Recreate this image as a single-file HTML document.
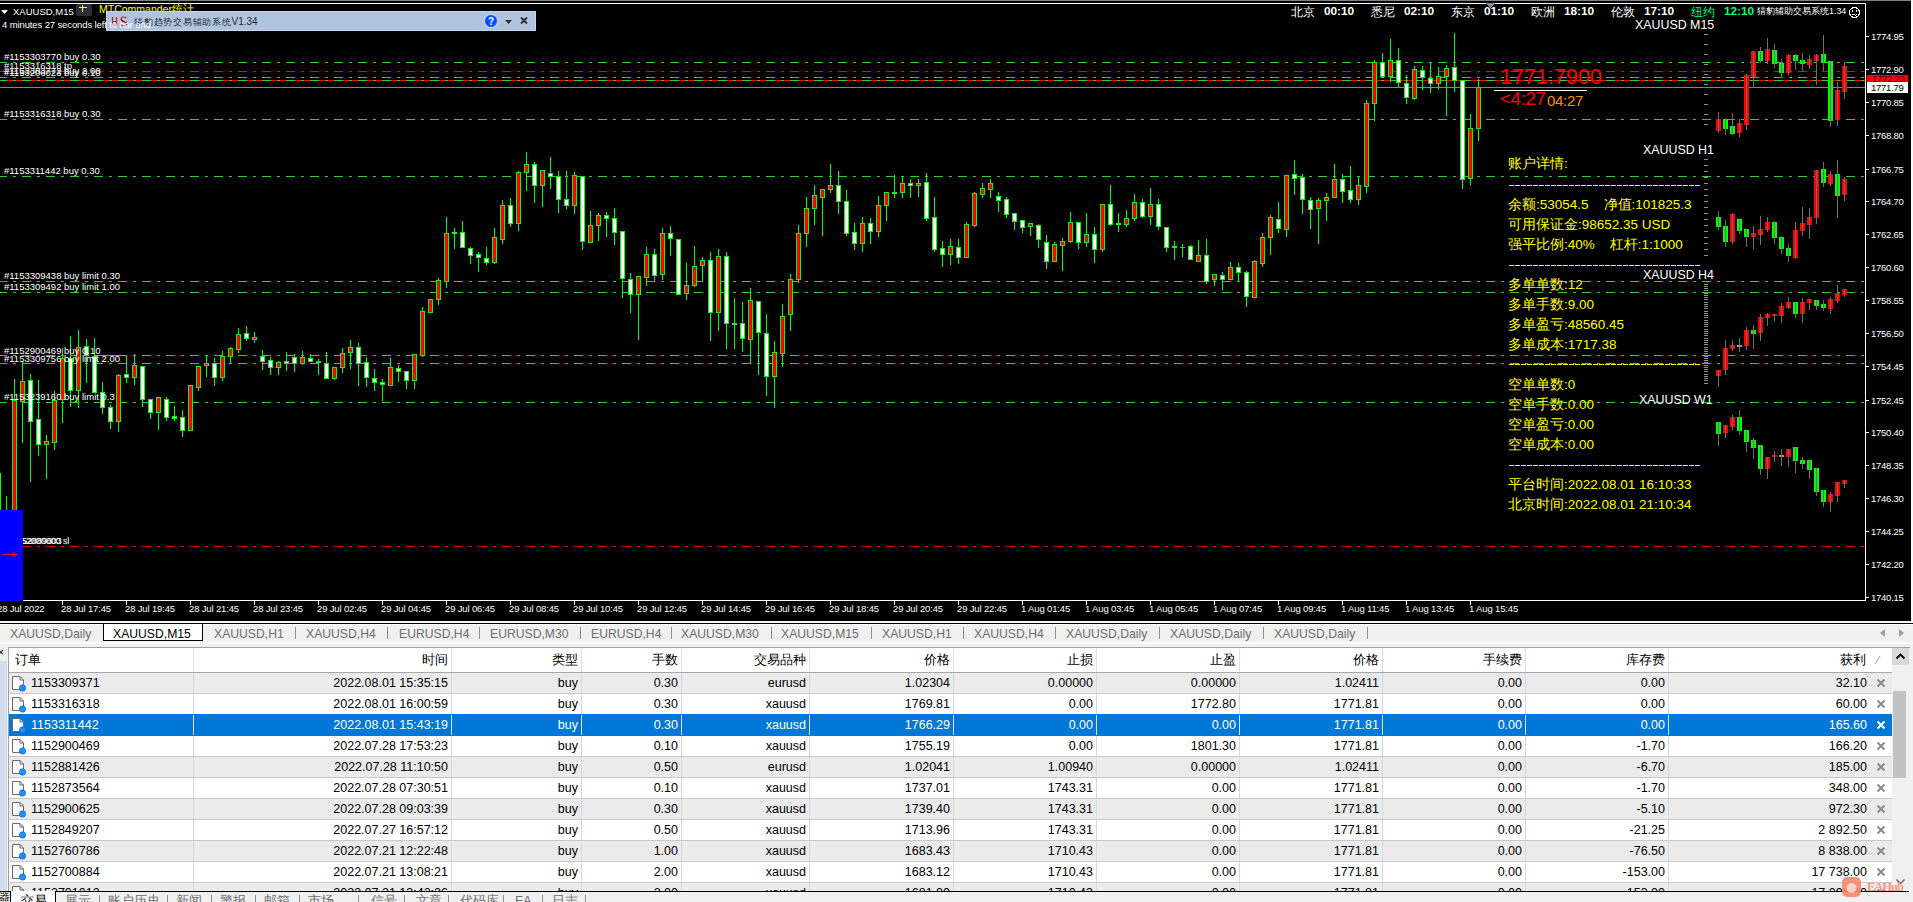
<!DOCTYPE html>
<html><head><meta charset="utf-8">
<style>
html,body{margin:0;padding:0;}
body{width:1913px;height:902px;overflow:hidden;position:relative;background:#f0f0f0;font-family:"Liberation Sans",sans-serif;}
.t{position:absolute;white-space:pre;font-family:"Liberation Sans",sans-serif;}
</style></head><body>
<svg width="1913" height="625" style="position:absolute;left:0;top:0" shape-rendering="crispEdges"><rect x="0" y="0" width="1911" height="621" fill="#000"/><line x1="0" y1="62.5" x2="1865" y2="62.5" stroke="#32cd32" stroke-width="1" stroke-dasharray="9 6 3 6" stroke-dashoffset="2"/><line x1="0" y1="77.5" x2="1865" y2="77.5" stroke="#32cd32" stroke-width="1" stroke-dasharray="9 6 3 6" stroke-dashoffset="2"/><line x1="0" y1="119.5" x2="1865" y2="119.5" stroke="#32cd32" stroke-width="1" stroke-dasharray="9 6 3 6" stroke-dashoffset="2"/><line x1="0" y1="176.5" x2="1865" y2="176.5" stroke="#32cd32" stroke-width="1" stroke-dasharray="9 6 3 6" stroke-dashoffset="2"/><line x1="0" y1="281.5" x2="1865" y2="281.5" stroke="#32cd32" stroke-width="1" stroke-dasharray="9 6 3 6" stroke-dashoffset="2"/><line x1="0" y1="292.5" x2="1865" y2="292.5" stroke="#32cd32" stroke-width="1" stroke-dasharray="9 6 3 6" stroke-dashoffset="2"/><line x1="0" y1="355.5" x2="1865" y2="355.5" stroke="#32cd32" stroke-width="1" stroke-dasharray="9 6 3 6" stroke-dashoffset="2"/><line x1="0" y1="363.5" x2="1865" y2="363.5" stroke="#32cd32" stroke-width="1" stroke-dasharray="9 6 3 6" stroke-dashoffset="2"/><line x1="0" y1="402.5" x2="1865" y2="402.5" stroke="#32cd32" stroke-width="1" stroke-dasharray="9 6 3 6" stroke-dashoffset="2"/><line x1="0" y1="71.5" x2="1865" y2="71.5" stroke="#ff0000" stroke-width="1" stroke-dasharray="9 6 3 6" stroke-dashoffset="2"/><rect x="0" y="80" width="1865" height="1" fill="#ff0000"/><line x1="0" y1="80.5" x2="1865" y2="80.5" stroke="#32cd32" stroke-width="1" stroke-dasharray="9 6 3 6" stroke-dashoffset="2"/><rect x="0" y="87" width="1865" height="1" fill="#778899"/><line x1="23" y1="546.5" x2="1865" y2="546.5" stroke="#ff0000" stroke-width="1" stroke-dasharray="9 6 3 6" stroke-dashoffset="1"/><rect x="0" y="473" width="1" height="40" fill="#00ff00"/><rect x="96" y="355" width="31" height="1" fill="#00ff00"/><rect x="6" y="496" width="1" height="20" fill="#00ff00"/><rect x="14" y="379" width="1" height="132" fill="#00ff00"/><rect x="12" y="400" width="5" height="111" fill="#00ff00"/><rect x="13" y="401" width="3" height="109" fill="#ff0000"/><rect x="22" y="362" width="1" height="81" fill="#00ff00"/><rect x="20" y="381" width="5" height="21" fill="#00ff00"/><rect x="21" y="382" width="3" height="19" fill="#ff0000"/><rect x="30" y="374" width="1" height="108" fill="#00ff00"/><rect x="28" y="380" width="5" height="42" fill="#00ff00"/><rect x="29" y="381" width="3" height="40" fill="#ffffff"/><rect x="38" y="380" width="1" height="76" fill="#00ff00"/><rect x="36" y="419" width="5" height="26" fill="#00ff00"/><rect x="37" y="420" width="3" height="24" fill="#ffffff"/><rect x="46" y="435" width="1" height="44" fill="#00ff00"/><rect x="44" y="441" width="5" height="4" fill="#00ff00"/><rect x="45" y="442" width="3" height="2" fill="#ff0000"/><rect x="54" y="391" width="1" height="59" fill="#00ff00"/><rect x="52" y="400" width="5" height="43" fill="#00ff00"/><rect x="53" y="401" width="3" height="41" fill="#ff0000"/><rect x="62" y="348" width="1" height="75" fill="#00ff00"/><rect x="60" y="358" width="5" height="42" fill="#00ff00"/><rect x="61" y="359" width="3" height="40" fill="#ff0000"/><rect x="70" y="336" width="1" height="71" fill="#00ff00"/><rect x="68" y="358" width="5" height="33" fill="#00ff00"/><rect x="69" y="359" width="3" height="31" fill="#ffffff"/><rect x="78" y="330" width="1" height="78" fill="#00ff00"/><rect x="76" y="347" width="5" height="44" fill="#00ff00"/><rect x="77" y="348" width="3" height="42" fill="#ff0000"/><rect x="86" y="339" width="1" height="44" fill="#00ff00"/><rect x="84" y="346" width="5" height="10" fill="#00ff00"/><rect x="85" y="347" width="3" height="8" fill="#ffffff"/><rect x="94" y="338" width="1" height="55" fill="#00ff00"/><rect x="92" y="356" width="5" height="37" fill="#00ff00"/><rect x="93" y="357" width="3" height="35" fill="#ffffff"/><rect x="102" y="382" width="1" height="32" fill="#00ff00"/><rect x="100" y="392" width="5" height="16" fill="#00ff00"/><rect x="101" y="393" width="3" height="14" fill="#ffffff"/><rect x="110" y="405" width="1" height="24" fill="#00ff00"/><rect x="108" y="407" width="5" height="15" fill="#00ff00"/><rect x="109" y="408" width="3" height="13" fill="#ffffff"/><rect x="118" y="374" width="1" height="58" fill="#00ff00"/><rect x="116" y="375" width="5" height="47" fill="#00ff00"/><rect x="117" y="376" width="3" height="45" fill="#ff0000"/><rect x="126" y="355" width="1" height="28" fill="#00ff00"/><rect x="124" y="374" width="5" height="4" fill="#00ff00"/><rect x="125" y="375" width="3" height="2" fill="#ffffff"/><rect x="134" y="354" width="1" height="31" fill="#00ff00"/><rect x="132" y="365" width="5" height="13" fill="#00ff00"/><rect x="133" y="366" width="3" height="11" fill="#ff0000"/><rect x="142" y="366" width="1" height="41" fill="#00ff00"/><rect x="140" y="366" width="5" height="34" fill="#00ff00"/><rect x="141" y="367" width="3" height="32" fill="#ffffff"/><rect x="150" y="399" width="1" height="20" fill="#00ff00"/><rect x="148" y="399" width="5" height="14" fill="#00ff00"/><rect x="149" y="400" width="3" height="12" fill="#ffffff"/><rect x="158" y="397" width="1" height="33" fill="#00ff00"/><rect x="156" y="397" width="5" height="16" fill="#00ff00"/><rect x="157" y="398" width="3" height="14" fill="#ff0000"/><rect x="166" y="397" width="1" height="24" fill="#00ff00"/><rect x="164" y="399" width="5" height="19" fill="#00ff00"/><rect x="165" y="400" width="3" height="17" fill="#ffffff"/><rect x="174" y="406" width="1" height="15" fill="#00ff00"/><rect x="172" y="416" width="5" height="3" fill="#00ff00"/><rect x="173" y="417" width="3" height="1" fill="#ffffff"/><rect x="182" y="410" width="1" height="27" fill="#00ff00"/><rect x="180" y="417" width="5" height="14" fill="#00ff00"/><rect x="181" y="418" width="3" height="12" fill="#ffffff"/><rect x="190" y="385" width="1" height="46" fill="#00ff00"/><rect x="188" y="385" width="5" height="46" fill="#00ff00"/><rect x="189" y="386" width="3" height="44" fill="#ff0000"/><rect x="198" y="366" width="1" height="25" fill="#00ff00"/><rect x="196" y="366" width="5" height="22" fill="#00ff00"/><rect x="197" y="367" width="3" height="20" fill="#ff0000"/><rect x="206" y="356" width="1" height="21" fill="#00ff00"/><rect x="204" y="363" width="5" height="3" fill="#00ff00"/><rect x="205" y="364" width="3" height="1" fill="#ff0000"/><rect x="214" y="358" width="1" height="28" fill="#00ff00"/><rect x="212" y="363" width="5" height="15" fill="#00ff00"/><rect x="213" y="364" width="3" height="13" fill="#ffffff"/><rect x="222" y="351" width="1" height="30" fill="#00ff00"/><rect x="220" y="356" width="5" height="22" fill="#00ff00"/><rect x="221" y="357" width="3" height="20" fill="#ff0000"/><rect x="230" y="347" width="1" height="17" fill="#00ff00"/><rect x="228" y="348" width="5" height="9" fill="#00ff00"/><rect x="229" y="349" width="3" height="7" fill="#ff0000"/><rect x="238" y="328" width="1" height="25" fill="#00ff00"/><rect x="236" y="334" width="5" height="16" fill="#00ff00"/><rect x="237" y="335" width="3" height="14" fill="#ff0000"/><rect x="246" y="326" width="1" height="15" fill="#00ff00"/><rect x="244" y="333" width="5" height="6" fill="#00ff00"/><rect x="245" y="334" width="3" height="4" fill="#ffffff"/><rect x="254" y="332" width="1" height="11" fill="#00ff00"/><rect x="252" y="337" width="5" height="3" fill="#00ff00"/><rect x="253" y="338" width="3" height="1" fill="#ff0000"/><rect x="262" y="350" width="1" height="20" fill="#00ff00"/><rect x="260" y="356" width="5" height="6" fill="#00ff00"/><rect x="261" y="357" width="3" height="4" fill="#ffffff"/><rect x="270" y="357" width="1" height="18" fill="#00ff00"/><rect x="268" y="360" width="5" height="8" fill="#00ff00"/><rect x="269" y="361" width="3" height="6" fill="#ffffff"/><rect x="278" y="361" width="1" height="14" fill="#00ff00"/><rect x="276" y="362" width="5" height="6" fill="#00ff00"/><rect x="277" y="363" width="3" height="4" fill="#ff0000"/><rect x="286" y="352" width="1" height="19" fill="#00ff00"/><rect x="284" y="361" width="5" height="3" fill="#00ff00"/><rect x="285" y="362" width="3" height="1" fill="#ffffff"/><rect x="294" y="354" width="1" height="18" fill="#00ff00"/><rect x="292" y="357" width="5" height="7" fill="#00ff00"/><rect x="293" y="358" width="3" height="5" fill="#ffffff"/><rect x="302" y="351" width="1" height="14" fill="#00ff00"/><rect x="300" y="357" width="5" height="7" fill="#00ff00"/><rect x="301" y="358" width="3" height="5" fill="#ff0000"/><rect x="310" y="354" width="1" height="8" fill="#00ff00"/><rect x="308" y="358" width="5" height="4" fill="#00ff00"/><rect x="309" y="359" width="3" height="2" fill="#ffffff"/><rect x="318" y="359" width="1" height="16" fill="#00ff00"/><rect x="316" y="361" width="5" height="2" fill="#00ff00"/><rect x="326" y="352" width="1" height="27" fill="#00ff00"/><rect x="324" y="363" width="5" height="16" fill="#00ff00"/><rect x="325" y="364" width="3" height="14" fill="#ffffff"/><rect x="334" y="367" width="1" height="13" fill="#00ff00"/><rect x="332" y="367" width="5" height="12" fill="#00ff00"/><rect x="333" y="368" width="3" height="10" fill="#ff0000"/><rect x="342" y="348" width="1" height="25" fill="#00ff00"/><rect x="340" y="353" width="5" height="15" fill="#00ff00"/><rect x="341" y="354" width="3" height="13" fill="#ff0000"/><rect x="350" y="340" width="1" height="29" fill="#00ff00"/><rect x="348" y="347" width="5" height="6" fill="#00ff00"/><rect x="349" y="348" width="3" height="4" fill="#ff0000"/><rect x="358" y="343" width="1" height="43" fill="#00ff00"/><rect x="356" y="347" width="5" height="17" fill="#00ff00"/><rect x="357" y="348" width="3" height="15" fill="#ffffff"/><rect x="366" y="357" width="1" height="30" fill="#00ff00"/><rect x="364" y="362" width="5" height="16" fill="#00ff00"/><rect x="365" y="363" width="3" height="14" fill="#ffffff"/><rect x="374" y="369" width="1" height="22" fill="#00ff00"/><rect x="372" y="378" width="5" height="5" fill="#00ff00"/><rect x="373" y="379" width="3" height="3" fill="#ffffff"/><rect x="382" y="379" width="1" height="22" fill="#00ff00"/><rect x="380" y="382" width="5" height="3" fill="#00ff00"/><rect x="381" y="383" width="3" height="1" fill="#ffffff"/><rect x="390" y="358" width="1" height="28" fill="#00ff00"/><rect x="388" y="367" width="5" height="19" fill="#00ff00"/><rect x="389" y="368" width="3" height="17" fill="#ff0000"/><rect x="398" y="365" width="1" height="17" fill="#00ff00"/><rect x="396" y="368" width="5" height="4" fill="#00ff00"/><rect x="397" y="369" width="3" height="2" fill="#ffffff"/><rect x="406" y="371" width="1" height="18" fill="#00ff00"/><rect x="404" y="371" width="5" height="10" fill="#00ff00"/><rect x="405" y="372" width="3" height="8" fill="#ffffff"/><rect x="414" y="354" width="1" height="35" fill="#00ff00"/><rect x="412" y="354" width="5" height="27" fill="#00ff00"/><rect x="413" y="355" width="3" height="25" fill="#ff0000"/><rect x="422" y="307" width="1" height="50" fill="#00ff00"/><rect x="420" y="311" width="5" height="45" fill="#00ff00"/><rect x="421" y="312" width="3" height="43" fill="#ff0000"/><rect x="430" y="299" width="1" height="14" fill="#00ff00"/><rect x="428" y="299" width="5" height="14" fill="#00ff00"/><rect x="429" y="300" width="3" height="12" fill="#ff0000"/><rect x="438" y="278" width="1" height="27" fill="#00ff00"/><rect x="436" y="280" width="5" height="20" fill="#00ff00"/><rect x="437" y="281" width="3" height="18" fill="#ff0000"/><rect x="446" y="217" width="1" height="71" fill="#00ff00"/><rect x="444" y="233" width="5" height="49" fill="#00ff00"/><rect x="445" y="234" width="3" height="47" fill="#ff0000"/><rect x="454" y="228" width="1" height="21" fill="#00ff00"/><rect x="452" y="232" width="5" height="2" fill="#00ff00"/><rect x="462" y="221" width="1" height="27" fill="#00ff00"/><rect x="460" y="232" width="5" height="16" fill="#00ff00"/><rect x="461" y="233" width="3" height="14" fill="#ffffff"/><rect x="470" y="247" width="1" height="17" fill="#00ff00"/><rect x="468" y="248" width="5" height="8" fill="#00ff00"/><rect x="469" y="249" width="3" height="6" fill="#ffffff"/><rect x="478" y="252" width="1" height="20" fill="#00ff00"/><rect x="476" y="254" width="5" height="4" fill="#00ff00"/><rect x="477" y="255" width="3" height="2" fill="#ffffff"/><rect x="486" y="247" width="1" height="18" fill="#00ff00"/><rect x="484" y="258" width="5" height="5" fill="#00ff00"/><rect x="485" y="259" width="3" height="3" fill="#ffffff"/><rect x="494" y="228" width="1" height="36" fill="#00ff00"/><rect x="492" y="237" width="5" height="26" fill="#00ff00"/><rect x="493" y="238" width="3" height="24" fill="#ff0000"/><rect x="502" y="200" width="1" height="44" fill="#00ff00"/><rect x="500" y="205" width="5" height="35" fill="#00ff00"/><rect x="501" y="206" width="3" height="33" fill="#ff0000"/><rect x="510" y="198" width="1" height="29" fill="#00ff00"/><rect x="508" y="205" width="5" height="19" fill="#00ff00"/><rect x="509" y="206" width="3" height="17" fill="#ffffff"/><rect x="518" y="171" width="1" height="60" fill="#00ff00"/><rect x="516" y="172" width="5" height="52" fill="#00ff00"/><rect x="517" y="173" width="3" height="50" fill="#ff0000"/><rect x="526" y="152" width="1" height="39" fill="#00ff00"/><rect x="524" y="164" width="5" height="9" fill="#00ff00"/><rect x="525" y="165" width="3" height="7" fill="#ff0000"/><rect x="534" y="162" width="1" height="41" fill="#00ff00"/><rect x="532" y="164" width="5" height="22" fill="#00ff00"/><rect x="533" y="165" width="3" height="20" fill="#ffffff"/><rect x="542" y="170" width="1" height="37" fill="#00ff00"/><rect x="540" y="170" width="5" height="16" fill="#00ff00"/><rect x="541" y="171" width="3" height="14" fill="#ff0000"/><rect x="550" y="157" width="1" height="32" fill="#00ff00"/><rect x="548" y="173" width="5" height="4" fill="#00ff00"/><rect x="549" y="174" width="3" height="2" fill="#ffffff"/><rect x="558" y="171" width="1" height="42" fill="#00ff00"/><rect x="556" y="176" width="5" height="24" fill="#00ff00"/><rect x="557" y="177" width="3" height="22" fill="#ffffff"/><rect x="566" y="171" width="1" height="38" fill="#00ff00"/><rect x="564" y="199" width="5" height="7" fill="#00ff00"/><rect x="565" y="200" width="3" height="5" fill="#ffffff"/><rect x="574" y="172" width="1" height="42" fill="#00ff00"/><rect x="572" y="175" width="5" height="31" fill="#00ff00"/><rect x="573" y="176" width="3" height="29" fill="#ff0000"/><rect x="582" y="176" width="1" height="74" fill="#00ff00"/><rect x="580" y="176" width="5" height="66" fill="#00ff00"/><rect x="581" y="177" width="3" height="64" fill="#ffffff"/><rect x="590" y="211" width="1" height="32" fill="#00ff00"/><rect x="588" y="225" width="5" height="18" fill="#00ff00"/><rect x="589" y="226" width="3" height="16" fill="#ff0000"/><rect x="598" y="213" width="1" height="28" fill="#00ff00"/><rect x="596" y="215" width="5" height="11" fill="#00ff00"/><rect x="597" y="216" width="3" height="9" fill="#ff0000"/><rect x="606" y="212" width="1" height="25" fill="#00ff00"/><rect x="604" y="215" width="5" height="4" fill="#00ff00"/><rect x="605" y="216" width="3" height="2" fill="#ffffff"/><rect x="614" y="208" width="1" height="37" fill="#00ff00"/><rect x="612" y="218" width="5" height="15" fill="#00ff00"/><rect x="613" y="219" width="3" height="13" fill="#ffffff"/><rect x="622" y="231" width="1" height="67" fill="#00ff00"/><rect x="620" y="231" width="5" height="48" fill="#00ff00"/><rect x="621" y="232" width="3" height="46" fill="#ffffff"/><rect x="630" y="273" width="1" height="40" fill="#00ff00"/><rect x="628" y="279" width="5" height="16" fill="#00ff00"/><rect x="629" y="280" width="3" height="14" fill="#ffffff"/><rect x="638" y="276" width="1" height="64" fill="#00ff00"/><rect x="636" y="276" width="5" height="19" fill="#00ff00"/><rect x="637" y="277" width="3" height="17" fill="#ff0000"/><rect x="646" y="247" width="1" height="39" fill="#00ff00"/><rect x="644" y="254" width="5" height="24" fill="#00ff00"/><rect x="645" y="255" width="3" height="22" fill="#ff0000"/><rect x="654" y="249" width="1" height="33" fill="#00ff00"/><rect x="652" y="254" width="5" height="22" fill="#00ff00"/><rect x="653" y="255" width="3" height="20" fill="#ffffff"/><rect x="662" y="228" width="1" height="52" fill="#00ff00"/><rect x="660" y="233" width="5" height="42" fill="#00ff00"/><rect x="661" y="234" width="3" height="40" fill="#ff0000"/><rect x="670" y="226" width="1" height="30" fill="#00ff00"/><rect x="668" y="233" width="5" height="6" fill="#00ff00"/><rect x="669" y="234" width="3" height="4" fill="#ffffff"/><rect x="678" y="239" width="1" height="56" fill="#00ff00"/><rect x="676" y="239" width="5" height="56" fill="#00ff00"/><rect x="677" y="240" width="3" height="54" fill="#ffffff"/><rect x="686" y="263" width="1" height="37" fill="#00ff00"/><rect x="684" y="285" width="5" height="9" fill="#00ff00"/><rect x="685" y="286" width="3" height="7" fill="#ff0000"/><rect x="694" y="246" width="1" height="41" fill="#00ff00"/><rect x="692" y="266" width="5" height="20" fill="#00ff00"/><rect x="693" y="267" width="3" height="18" fill="#ff0000"/><rect x="702" y="257" width="1" height="24" fill="#00ff00"/><rect x="700" y="260" width="5" height="6" fill="#00ff00"/><rect x="701" y="261" width="3" height="4" fill="#ff0000"/><rect x="710" y="252" width="1" height="89" fill="#00ff00"/><rect x="708" y="260" width="5" height="53" fill="#00ff00"/><rect x="709" y="261" width="3" height="51" fill="#ffffff"/><rect x="718" y="249" width="1" height="82" fill="#00ff00"/><rect x="716" y="256" width="5" height="57" fill="#00ff00"/><rect x="717" y="257" width="3" height="55" fill="#ff0000"/><rect x="726" y="252" width="1" height="97" fill="#00ff00"/><rect x="724" y="256" width="5" height="68" fill="#00ff00"/><rect x="725" y="257" width="3" height="66" fill="#ffffff"/><rect x="734" y="298" width="1" height="51" fill="#00ff00"/><rect x="732" y="323" width="5" height="2" fill="#00ff00"/><rect x="742" y="302" width="1" height="50" fill="#00ff00"/><rect x="740" y="323" width="5" height="16" fill="#00ff00"/><rect x="741" y="324" width="3" height="14" fill="#ffffff"/><rect x="750" y="288" width="1" height="76" fill="#00ff00"/><rect x="748" y="300" width="5" height="40" fill="#00ff00"/><rect x="749" y="301" width="3" height="38" fill="#ff0000"/><rect x="758" y="301" width="1" height="74" fill="#00ff00"/><rect x="756" y="301" width="5" height="32" fill="#00ff00"/><rect x="757" y="302" width="3" height="30" fill="#ffffff"/><rect x="766" y="314" width="1" height="82" fill="#00ff00"/><rect x="764" y="333" width="5" height="44" fill="#00ff00"/><rect x="765" y="334" width="3" height="42" fill="#ffffff"/><rect x="774" y="341" width="1" height="67" fill="#00ff00"/><rect x="772" y="352" width="5" height="25" fill="#00ff00"/><rect x="773" y="353" width="3" height="23" fill="#ff0000"/><rect x="782" y="304" width="1" height="63" fill="#00ff00"/><rect x="780" y="316" width="5" height="38" fill="#00ff00"/><rect x="781" y="317" width="3" height="36" fill="#ff0000"/><rect x="790" y="274" width="1" height="57" fill="#00ff00"/><rect x="788" y="279" width="5" height="36" fill="#00ff00"/><rect x="789" y="280" width="3" height="34" fill="#ff0000"/><rect x="798" y="225" width="1" height="58" fill="#00ff00"/><rect x="796" y="233" width="5" height="47" fill="#00ff00"/><rect x="797" y="234" width="3" height="45" fill="#ff0000"/><rect x="806" y="197" width="1" height="50" fill="#00ff00"/><rect x="804" y="208" width="5" height="26" fill="#00ff00"/><rect x="805" y="209" width="3" height="24" fill="#ff0000"/><rect x="814" y="185" width="1" height="40" fill="#00ff00"/><rect x="812" y="195" width="5" height="14" fill="#00ff00"/><rect x="813" y="196" width="3" height="12" fill="#ff0000"/><rect x="822" y="189" width="1" height="47" fill="#00ff00"/><rect x="820" y="189" width="5" height="9" fill="#00ff00"/><rect x="821" y="190" width="3" height="7" fill="#ff0000"/><rect x="830" y="164" width="1" height="29" fill="#00ff00"/><rect x="828" y="185" width="5" height="5" fill="#00ff00"/><rect x="829" y="186" width="3" height="3" fill="#ff0000"/><rect x="838" y="171" width="1" height="43" fill="#00ff00"/><rect x="836" y="185" width="5" height="17" fill="#00ff00"/><rect x="837" y="186" width="3" height="15" fill="#ffffff"/><rect x="846" y="190" width="1" height="46" fill="#00ff00"/><rect x="844" y="201" width="5" height="33" fill="#00ff00"/><rect x="845" y="202" width="3" height="31" fill="#ffffff"/><rect x="854" y="223" width="1" height="27" fill="#00ff00"/><rect x="852" y="232" width="5" height="12" fill="#00ff00"/><rect x="853" y="233" width="3" height="10" fill="#ffffff"/><rect x="862" y="217" width="1" height="35" fill="#00ff00"/><rect x="860" y="223" width="5" height="21" fill="#00ff00"/><rect x="861" y="224" width="3" height="19" fill="#ff0000"/><rect x="870" y="218" width="1" height="26" fill="#00ff00"/><rect x="868" y="223" width="5" height="9" fill="#00ff00"/><rect x="869" y="224" width="3" height="7" fill="#ffffff"/><rect x="878" y="196" width="1" height="41" fill="#00ff00"/><rect x="876" y="205" width="5" height="27" fill="#00ff00"/><rect x="877" y="206" width="3" height="25" fill="#ff0000"/><rect x="886" y="192" width="1" height="29" fill="#00ff00"/><rect x="884" y="192" width="5" height="14" fill="#00ff00"/><rect x="885" y="193" width="3" height="12" fill="#ff0000"/><rect x="894" y="175" width="1" height="23" fill="#00ff00"/><rect x="892" y="192" width="5" height="2" fill="#00ff00"/><rect x="902" y="176" width="1" height="22" fill="#00ff00"/><rect x="900" y="183" width="5" height="10" fill="#00ff00"/><rect x="901" y="184" width="3" height="8" fill="#ff0000"/><rect x="910" y="179" width="1" height="19" fill="#00ff00"/><rect x="908" y="183" width="5" height="3" fill="#00ff00"/><rect x="909" y="184" width="3" height="1" fill="#ffffff"/><rect x="918" y="179" width="1" height="18" fill="#00ff00"/><rect x="916" y="183" width="5" height="3" fill="#00ff00"/><rect x="917" y="184" width="3" height="1" fill="#ff0000"/><rect x="926" y="173" width="1" height="48" fill="#00ff00"/><rect x="924" y="182" width="5" height="37" fill="#00ff00"/><rect x="925" y="183" width="3" height="35" fill="#ffffff"/><rect x="934" y="197" width="1" height="55" fill="#00ff00"/><rect x="932" y="217" width="5" height="33" fill="#00ff00"/><rect x="933" y="218" width="3" height="31" fill="#ffffff"/><rect x="942" y="241" width="1" height="26" fill="#00ff00"/><rect x="940" y="248" width="5" height="7" fill="#00ff00"/><rect x="941" y="249" width="3" height="5" fill="#ffffff"/><rect x="950" y="239" width="1" height="26" fill="#00ff00"/><rect x="948" y="246" width="5" height="9" fill="#00ff00"/><rect x="949" y="247" width="3" height="7" fill="#ff0000"/><rect x="958" y="239" width="1" height="25" fill="#00ff00"/><rect x="956" y="247" width="5" height="11" fill="#00ff00"/><rect x="957" y="248" width="3" height="9" fill="#ffffff"/><rect x="966" y="222" width="1" height="36" fill="#00ff00"/><rect x="964" y="224" width="5" height="34" fill="#00ff00"/><rect x="965" y="225" width="3" height="32" fill="#ff0000"/><rect x="974" y="192" width="1" height="35" fill="#00ff00"/><rect x="972" y="193" width="5" height="33" fill="#00ff00"/><rect x="973" y="194" width="3" height="31" fill="#ff0000"/><rect x="982" y="183" width="1" height="15" fill="#00ff00"/><rect x="980" y="188" width="5" height="7" fill="#00ff00"/><rect x="981" y="189" width="3" height="5" fill="#ff0000"/><rect x="990" y="179" width="1" height="19" fill="#00ff00"/><rect x="988" y="183" width="5" height="7" fill="#00ff00"/><rect x="989" y="184" width="3" height="5" fill="#ff0000"/><rect x="998" y="192" width="1" height="20" fill="#00ff00"/><rect x="996" y="196" width="5" height="5" fill="#00ff00"/><rect x="997" y="197" width="3" height="3" fill="#ffffff"/><rect x="1006" y="197" width="1" height="21" fill="#00ff00"/><rect x="1004" y="199" width="5" height="16" fill="#00ff00"/><rect x="1005" y="200" width="3" height="14" fill="#ffffff"/><rect x="1014" y="213" width="1" height="17" fill="#00ff00"/><rect x="1012" y="213" width="5" height="9" fill="#00ff00"/><rect x="1013" y="214" width="3" height="7" fill="#ffffff"/><rect x="1022" y="220" width="1" height="13" fill="#00ff00"/><rect x="1020" y="220" width="5" height="8" fill="#00ff00"/><rect x="1021" y="221" width="3" height="6" fill="#ffffff"/><rect x="1030" y="223" width="1" height="13" fill="#00ff00"/><rect x="1028" y="223" width="5" height="4" fill="#00ff00"/><rect x="1029" y="224" width="3" height="2" fill="#ff0000"/><rect x="1038" y="224" width="1" height="24" fill="#00ff00"/><rect x="1036" y="225" width="5" height="15" fill="#00ff00"/><rect x="1037" y="226" width="3" height="13" fill="#ffffff"/><rect x="1046" y="235" width="1" height="34" fill="#00ff00"/><rect x="1044" y="242" width="5" height="20" fill="#00ff00"/><rect x="1045" y="243" width="3" height="18" fill="#ffffff"/><rect x="1054" y="242" width="1" height="20" fill="#00ff00"/><rect x="1052" y="244" width="5" height="18" fill="#00ff00"/><rect x="1053" y="245" width="3" height="16" fill="#ff0000"/><rect x="1062" y="238" width="1" height="33" fill="#00ff00"/><rect x="1060" y="241" width="5" height="5" fill="#00ff00"/><rect x="1061" y="242" width="3" height="3" fill="#ff0000"/><rect x="1070" y="212" width="1" height="31" fill="#00ff00"/><rect x="1068" y="222" width="5" height="20" fill="#00ff00"/><rect x="1069" y="223" width="3" height="18" fill="#ff0000"/><rect x="1078" y="222" width="1" height="27" fill="#00ff00"/><rect x="1076" y="222" width="5" height="21" fill="#00ff00"/><rect x="1077" y="223" width="3" height="19" fill="#ffffff"/><rect x="1086" y="213" width="1" height="34" fill="#00ff00"/><rect x="1084" y="234" width="5" height="9" fill="#00ff00"/><rect x="1085" y="235" width="3" height="7" fill="#ff0000"/><rect x="1094" y="227" width="1" height="36" fill="#00ff00"/><rect x="1092" y="234" width="5" height="16" fill="#00ff00"/><rect x="1093" y="235" width="3" height="14" fill="#ffffff"/><rect x="1102" y="204" width="1" height="48" fill="#00ff00"/><rect x="1100" y="204" width="5" height="46" fill="#00ff00"/><rect x="1101" y="205" width="3" height="44" fill="#ff0000"/><rect x="1110" y="185" width="1" height="41" fill="#00ff00"/><rect x="1108" y="204" width="5" height="21" fill="#00ff00"/><rect x="1109" y="205" width="3" height="19" fill="#ffffff"/><rect x="1118" y="213" width="1" height="19" fill="#00ff00"/><rect x="1116" y="223" width="5" height="2" fill="#00ff00"/><rect x="1126" y="210" width="1" height="17" fill="#00ff00"/><rect x="1124" y="218" width="5" height="7" fill="#00ff00"/><rect x="1125" y="219" width="3" height="5" fill="#ff0000"/><rect x="1134" y="194" width="1" height="27" fill="#00ff00"/><rect x="1132" y="202" width="5" height="17" fill="#00ff00"/><rect x="1133" y="203" width="3" height="15" fill="#ff0000"/><rect x="1142" y="199" width="1" height="19" fill="#00ff00"/><rect x="1140" y="202" width="5" height="15" fill="#00ff00"/><rect x="1141" y="203" width="3" height="13" fill="#ffffff"/><rect x="1150" y="188" width="1" height="37" fill="#00ff00"/><rect x="1148" y="204" width="5" height="13" fill="#00ff00"/><rect x="1149" y="205" width="3" height="11" fill="#ff0000"/><rect x="1158" y="199" width="1" height="31" fill="#00ff00"/><rect x="1156" y="204" width="5" height="23" fill="#00ff00"/><rect x="1157" y="205" width="3" height="21" fill="#ffffff"/><rect x="1166" y="227" width="1" height="25" fill="#00ff00"/><rect x="1164" y="227" width="5" height="21" fill="#00ff00"/><rect x="1165" y="228" width="3" height="19" fill="#ffffff"/><rect x="1174" y="241" width="1" height="19" fill="#00ff00"/><rect x="1172" y="246" width="5" height="2" fill="#00ff00"/><rect x="1182" y="244" width="1" height="13" fill="#00ff00"/><rect x="1180" y="247" width="5" height="1" fill="#00ff00"/><rect x="1190" y="245" width="1" height="15" fill="#00ff00"/><rect x="1188" y="246" width="5" height="14" fill="#00ff00"/><rect x="1189" y="247" width="3" height="12" fill="#ffffff"/><rect x="1198" y="240" width="1" height="22" fill="#00ff00"/><rect x="1196" y="255" width="5" height="7" fill="#00ff00"/><rect x="1197" y="256" width="3" height="5" fill="#ff0000"/><rect x="1206" y="239" width="1" height="45" fill="#00ff00"/><rect x="1204" y="255" width="5" height="27" fill="#00ff00"/><rect x="1205" y="256" width="3" height="25" fill="#ffffff"/><rect x="1214" y="274" width="1" height="12" fill="#00ff00"/><rect x="1212" y="274" width="5" height="6" fill="#00ff00"/><rect x="1213" y="275" width="3" height="4" fill="#ff0000"/><rect x="1222" y="272" width="1" height="18" fill="#00ff00"/><rect x="1220" y="275" width="5" height="5" fill="#00ff00"/><rect x="1221" y="276" width="3" height="3" fill="#ffffff"/><rect x="1230" y="262" width="1" height="18" fill="#00ff00"/><rect x="1228" y="267" width="5" height="13" fill="#00ff00"/><rect x="1229" y="268" width="3" height="11" fill="#ff0000"/><rect x="1238" y="263" width="1" height="18" fill="#00ff00"/><rect x="1236" y="267" width="5" height="6" fill="#00ff00"/><rect x="1237" y="268" width="3" height="4" fill="#ffffff"/><rect x="1246" y="271" width="1" height="36" fill="#00ff00"/><rect x="1244" y="272" width="5" height="25" fill="#00ff00"/><rect x="1245" y="273" width="3" height="23" fill="#ffffff"/><rect x="1254" y="260" width="1" height="38" fill="#00ff00"/><rect x="1252" y="261" width="5" height="37" fill="#00ff00"/><rect x="1253" y="262" width="3" height="35" fill="#ff0000"/><rect x="1262" y="233" width="1" height="34" fill="#00ff00"/><rect x="1260" y="237" width="5" height="27" fill="#00ff00"/><rect x="1261" y="238" width="3" height="25" fill="#ff0000"/><rect x="1270" y="215" width="1" height="40" fill="#00ff00"/><rect x="1268" y="217" width="5" height="21" fill="#00ff00"/><rect x="1269" y="218" width="3" height="19" fill="#ff0000"/><rect x="1278" y="202" width="1" height="31" fill="#00ff00"/><rect x="1276" y="219" width="5" height="10" fill="#00ff00"/><rect x="1277" y="220" width="3" height="8" fill="#ffffff"/><rect x="1286" y="175" width="1" height="62" fill="#00ff00"/><rect x="1284" y="175" width="5" height="55" fill="#00ff00"/><rect x="1285" y="176" width="3" height="53" fill="#ff0000"/><rect x="1294" y="160" width="1" height="35" fill="#00ff00"/><rect x="1292" y="174" width="5" height="5" fill="#00ff00"/><rect x="1293" y="175" width="3" height="3" fill="#ffffff"/><rect x="1302" y="174" width="1" height="40" fill="#00ff00"/><rect x="1300" y="177" width="5" height="23" fill="#00ff00"/><rect x="1301" y="178" width="3" height="21" fill="#ffffff"/><rect x="1310" y="197" width="1" height="32" fill="#00ff00"/><rect x="1308" y="200" width="5" height="10" fill="#00ff00"/><rect x="1309" y="201" width="3" height="8" fill="#ffffff"/><rect x="1318" y="198" width="1" height="46" fill="#00ff00"/><rect x="1316" y="200" width="5" height="9" fill="#00ff00"/><rect x="1317" y="201" width="3" height="7" fill="#ff0000"/><rect x="1326" y="193" width="1" height="28" fill="#00ff00"/><rect x="1324" y="197" width="5" height="4" fill="#00ff00"/><rect x="1325" y="198" width="3" height="2" fill="#ff0000"/><rect x="1334" y="164" width="1" height="34" fill="#00ff00"/><rect x="1332" y="179" width="5" height="19" fill="#00ff00"/><rect x="1333" y="180" width="3" height="17" fill="#ff0000"/><rect x="1342" y="174" width="1" height="29" fill="#00ff00"/><rect x="1340" y="179" width="5" height="13" fill="#00ff00"/><rect x="1341" y="180" width="3" height="11" fill="#ffffff"/><rect x="1350" y="166" width="1" height="37" fill="#00ff00"/><rect x="1348" y="190" width="5" height="10" fill="#00ff00"/><rect x="1349" y="191" width="3" height="8" fill="#ffffff"/><rect x="1358" y="176" width="1" height="29" fill="#00ff00"/><rect x="1356" y="185" width="5" height="15" fill="#00ff00"/><rect x="1357" y="186" width="3" height="13" fill="#ff0000"/><rect x="1366" y="100" width="1" height="93" fill="#00ff00"/><rect x="1364" y="103" width="5" height="84" fill="#00ff00"/><rect x="1365" y="104" width="3" height="82" fill="#ff0000"/><rect x="1374" y="60" width="1" height="61" fill="#00ff00"/><rect x="1372" y="62" width="5" height="42" fill="#00ff00"/><rect x="1373" y="63" width="3" height="40" fill="#ff0000"/><rect x="1382" y="53" width="1" height="25" fill="#00ff00"/><rect x="1380" y="62" width="5" height="15" fill="#00ff00"/><rect x="1381" y="63" width="3" height="13" fill="#ffffff"/><rect x="1390" y="39" width="1" height="43" fill="#00ff00"/><rect x="1388" y="60" width="5" height="17" fill="#00ff00"/><rect x="1389" y="61" width="3" height="15" fill="#ff0000"/><rect x="1398" y="48" width="1" height="39" fill="#00ff00"/><rect x="1396" y="60" width="5" height="23" fill="#00ff00"/><rect x="1397" y="61" width="3" height="21" fill="#ffffff"/><rect x="1406" y="75" width="1" height="29" fill="#00ff00"/><rect x="1404" y="83" width="5" height="15" fill="#00ff00"/><rect x="1405" y="84" width="3" height="13" fill="#ffffff"/><rect x="1414" y="66" width="1" height="34" fill="#00ff00"/><rect x="1412" y="69" width="5" height="30" fill="#00ff00"/><rect x="1413" y="70" width="3" height="28" fill="#ff0000"/><rect x="1422" y="66" width="1" height="24" fill="#00ff00"/><rect x="1420" y="70" width="5" height="8" fill="#00ff00"/><rect x="1421" y="71" width="3" height="6" fill="#ffffff"/><rect x="1430" y="62" width="1" height="31" fill="#00ff00"/><rect x="1428" y="78" width="5" height="6" fill="#00ff00"/><rect x="1429" y="79" width="3" height="4" fill="#ffffff"/><rect x="1438" y="67" width="1" height="22" fill="#00ff00"/><rect x="1436" y="76" width="5" height="8" fill="#00ff00"/><rect x="1437" y="77" width="3" height="6" fill="#ff0000"/><rect x="1446" y="65" width="1" height="51" fill="#00ff00"/><rect x="1444" y="68" width="5" height="9" fill="#00ff00"/><rect x="1445" y="69" width="3" height="7" fill="#ff0000"/><rect x="1454" y="33" width="1" height="59" fill="#00ff00"/><rect x="1452" y="67" width="5" height="14" fill="#00ff00"/><rect x="1453" y="68" width="3" height="12" fill="#ffffff"/><rect x="1462" y="80" width="1" height="109" fill="#00ff00"/><rect x="1460" y="80" width="5" height="100" fill="#00ff00"/><rect x="1461" y="81" width="3" height="98" fill="#ffffff"/><rect x="1470" y="114" width="1" height="71" fill="#00ff00"/><rect x="1468" y="128" width="5" height="51" fill="#00ff00"/><rect x="1469" y="129" width="3" height="49" fill="#ff0000"/><rect x="1478" y="79" width="1" height="62" fill="#00ff00"/><rect x="1476" y="87" width="5" height="42" fill="#00ff00"/><rect x="1477" y="88" width="3" height="40" fill="#ff0000"/><rect x="1716" y="119" width="5" height="12" fill="#ff0000"/><rect x="1718" y="112" width="1" height="21" fill="#6e6e6e"/><rect x="1723" y="119" width="5" height="10" fill="#00ff00"/><rect x="1725" y="118" width="1" height="17" fill="#6e6e6e"/><rect x="1730" y="126" width="5" height="8" fill="#00ff00"/><rect x="1732" y="113" width="1" height="22" fill="#6e6e6e"/><rect x="1737" y="123" width="5" height="10" fill="#ff0000"/><rect x="1739" y="119" width="1" height="18" fill="#6e6e6e"/><rect x="1744" y="75" width="5" height="50" fill="#ff0000"/><rect x="1746" y="74" width="1" height="56" fill="#6e6e6e"/><rect x="1751" y="51" width="5" height="26" fill="#ff0000"/><rect x="1753" y="51" width="1" height="37" fill="#6e6e6e"/><rect x="1758" y="51" width="5" height="10" fill="#00ff00"/><rect x="1760" y="47" width="1" height="16" fill="#6e6e6e"/><rect x="1765" y="49" width="5" height="12" fill="#ff0000"/><rect x="1767" y="38" width="1" height="26" fill="#6e6e6e"/><rect x="1772" y="50" width="5" height="14" fill="#00ff00"/><rect x="1774" y="44" width="1" height="24" fill="#6e6e6e"/><rect x="1779" y="63" width="5" height="10" fill="#00ff00"/><rect x="1781" y="59" width="1" height="19" fill="#6e6e6e"/><rect x="1786" y="55" width="5" height="18" fill="#ff0000"/><rect x="1788" y="54" width="1" height="21" fill="#6e6e6e"/><rect x="1793" y="55" width="5" height="6" fill="#00ff00"/><rect x="1795" y="54" width="1" height="16" fill="#6e6e6e"/><rect x="1800" y="60" width="5" height="4" fill="#00ff00"/><rect x="1802" y="53" width="1" height="18" fill="#6e6e6e"/><rect x="1807" y="59" width="5" height="6" fill="#ff0000"/><rect x="1809" y="55" width="1" height="14" fill="#6e6e6e"/><rect x="1814" y="55" width="5" height="6" fill="#ff0000"/><rect x="1816" y="54" width="1" height="31" fill="#6e6e6e"/><rect x="1821" y="54" width="5" height="9" fill="#00ff00"/><rect x="1823" y="35" width="1" height="36" fill="#6e6e6e"/><rect x="1828" y="61" width="5" height="60" fill="#00ff00"/><rect x="1830" y="61" width="1" height="66" fill="#6e6e6e"/><rect x="1835" y="90" width="5" height="30" fill="#ff0000"/><rect x="1837" y="82" width="1" height="44" fill="#6e6e6e"/><rect x="1842" y="66" width="5" height="26" fill="#ff0000"/><rect x="1844" y="62" width="1" height="37" fill="#6e6e6e"/><rect x="1716" y="217" width="5" height="10" fill="#00ff00"/><rect x="1718" y="211" width="1" height="19" fill="#6e6e6e"/><rect x="1723" y="226" width="5" height="16" fill="#00ff00"/><rect x="1725" y="220" width="1" height="27" fill="#6e6e6e"/><rect x="1730" y="214" width="5" height="28" fill="#ff0000"/><rect x="1732" y="213" width="1" height="31" fill="#6e6e6e"/><rect x="1737" y="219" width="5" height="12" fill="#00ff00"/><rect x="1739" y="218" width="1" height="16" fill="#6e6e6e"/><rect x="1744" y="229" width="5" height="8" fill="#00ff00"/><rect x="1746" y="229" width="1" height="18" fill="#6e6e6e"/><rect x="1751" y="233" width="5" height="4" fill="#ff0000"/><rect x="1753" y="226" width="1" height="23" fill="#6e6e6e"/><rect x="1758" y="229" width="5" height="6" fill="#ff0000"/><rect x="1760" y="216" width="1" height="29" fill="#6e6e6e"/><rect x="1765" y="222" width="5" height="8" fill="#ff0000"/><rect x="1767" y="217" width="1" height="15" fill="#6e6e6e"/><rect x="1772" y="222" width="5" height="16" fill="#00ff00"/><rect x="1774" y="221" width="1" height="23" fill="#6e6e6e"/><rect x="1779" y="237" width="5" height="12" fill="#00ff00"/><rect x="1781" y="236" width="1" height="18" fill="#6e6e6e"/><rect x="1786" y="248" width="5" height="8" fill="#00ff00"/><rect x="1788" y="244" width="1" height="18" fill="#6e6e6e"/><rect x="1793" y="230" width="5" height="28" fill="#ff0000"/><rect x="1795" y="222" width="1" height="37" fill="#6e6e6e"/><rect x="1800" y="223" width="5" height="8" fill="#ff0000"/><rect x="1802" y="207" width="1" height="29" fill="#6e6e6e"/><rect x="1807" y="217" width="5" height="8" fill="#ff0000"/><rect x="1809" y="208" width="1" height="31" fill="#6e6e6e"/><rect x="1814" y="170" width="5" height="48" fill="#ff0000"/><rect x="1816" y="170" width="1" height="54" fill="#6e6e6e"/><rect x="1821" y="169" width="5" height="14" fill="#00ff00"/><rect x="1823" y="162" width="1" height="25" fill="#6e6e6e"/><rect x="1828" y="174" width="5" height="10" fill="#ff0000"/><rect x="1830" y="171" width="1" height="15" fill="#6e6e6e"/><rect x="1835" y="174" width="5" height="22" fill="#00ff00"/><rect x="1837" y="160" width="1" height="58" fill="#6e6e6e"/><rect x="1842" y="179" width="5" height="16" fill="#ff0000"/><rect x="1844" y="177" width="1" height="24" fill="#6e6e6e"/><rect x="1716" y="370" width="5" height="6" fill="#ff0000"/><rect x="1718" y="370" width="1" height="17" fill="#6e6e6e"/><rect x="1723" y="348" width="5" height="22" fill="#ff0000"/><rect x="1725" y="340" width="1" height="35" fill="#6e6e6e"/><rect x="1730" y="345" width="5" height="4" fill="#ff0000"/><rect x="1732" y="340" width="1" height="11" fill="#6e6e6e"/><rect x="1737" y="345" width="5" height="2" fill="#a0a0a0"/><rect x="1739" y="338" width="1" height="14" fill="#6e6e6e"/><rect x="1744" y="330" width="5" height="16" fill="#ff0000"/><rect x="1746" y="327" width="1" height="23" fill="#6e6e6e"/><rect x="1751" y="330" width="5" height="4" fill="#00ff00"/><rect x="1753" y="325" width="1" height="24" fill="#6e6e6e"/><rect x="1758" y="317" width="5" height="16" fill="#ff0000"/><rect x="1760" y="314" width="1" height="27" fill="#6e6e6e"/><rect x="1765" y="314" width="5" height="4" fill="#ff0000"/><rect x="1767" y="313" width="1" height="13" fill="#6e6e6e"/><rect x="1772" y="314" width="5" height="2" fill="#ff0000"/><rect x="1774" y="314" width="1" height="7" fill="#6e6e6e"/><rect x="1779" y="306" width="5" height="10" fill="#ff0000"/><rect x="1781" y="303" width="1" height="20" fill="#6e6e6e"/><rect x="1786" y="302" width="5" height="6" fill="#ff0000"/><rect x="1788" y="297" width="1" height="12" fill="#6e6e6e"/><rect x="1793" y="302" width="5" height="12" fill="#00ff00"/><rect x="1795" y="302" width="1" height="16" fill="#6e6e6e"/><rect x="1800" y="302" width="5" height="12" fill="#ff0000"/><rect x="1802" y="298" width="1" height="25" fill="#6e6e6e"/><rect x="1807" y="299" width="5" height="4" fill="#ff0000"/><rect x="1809" y="299" width="1" height="11" fill="#6e6e6e"/><rect x="1814" y="300" width="5" height="6" fill="#00ff00"/><rect x="1816" y="300" width="1" height="10" fill="#6e6e6e"/><rect x="1821" y="304" width="5" height="4" fill="#00ff00"/><rect x="1823" y="300" width="1" height="11" fill="#6e6e6e"/><rect x="1828" y="299" width="5" height="10" fill="#ff0000"/><rect x="1830" y="297" width="1" height="17" fill="#6e6e6e"/><rect x="1835" y="293" width="5" height="8" fill="#ff0000"/><rect x="1837" y="285" width="1" height="18" fill="#6e6e6e"/><rect x="1842" y="289" width="5" height="6" fill="#ff0000"/><rect x="1844" y="289" width="1" height="8" fill="#6e6e6e"/><rect x="1716" y="422" width="5" height="12" fill="#00ff00"/><rect x="1718" y="422" width="1" height="24" fill="#6e6e6e"/><rect x="1723" y="425" width="5" height="8" fill="#ff0000"/><rect x="1725" y="425" width="1" height="13" fill="#6e6e6e"/><rect x="1730" y="417" width="5" height="10" fill="#ff0000"/><rect x="1732" y="415" width="1" height="15" fill="#6e6e6e"/><rect x="1737" y="417" width="5" height="14" fill="#00ff00"/><rect x="1739" y="410" width="1" height="25" fill="#6e6e6e"/><rect x="1744" y="430" width="5" height="12" fill="#00ff00"/><rect x="1746" y="430" width="1" height="22" fill="#6e6e6e"/><rect x="1751" y="440" width="5" height="8" fill="#00ff00"/><rect x="1753" y="438" width="1" height="21" fill="#6e6e6e"/><rect x="1758" y="445" width="5" height="24" fill="#00ff00"/><rect x="1760" y="445" width="1" height="30" fill="#6e6e6e"/><rect x="1765" y="457" width="5" height="12" fill="#ff0000"/><rect x="1767" y="457" width="1" height="22" fill="#6e6e6e"/><rect x="1772" y="455" width="5" height="2" fill="#ff0000"/><rect x="1774" y="451" width="1" height="11" fill="#6e6e6e"/><rect x="1779" y="455" width="5" height="2" fill="#a0a0a0"/><rect x="1781" y="449" width="1" height="17" fill="#6e6e6e"/><rect x="1786" y="449" width="5" height="8" fill="#ff0000"/><rect x="1788" y="449" width="1" height="18" fill="#6e6e6e"/><rect x="1793" y="447" width="5" height="14" fill="#00ff00"/><rect x="1795" y="447" width="1" height="26" fill="#6e6e6e"/><rect x="1800" y="460" width="5" height="4" fill="#00ff00"/><rect x="1802" y="457" width="1" height="12" fill="#6e6e6e"/><rect x="1807" y="460" width="5" height="10" fill="#00ff00"/><rect x="1809" y="460" width="1" height="19" fill="#6e6e6e"/><rect x="1814" y="468" width="5" height="24" fill="#00ff00"/><rect x="1816" y="468" width="1" height="28" fill="#6e6e6e"/><rect x="1821" y="490" width="5" height="12" fill="#00ff00"/><rect x="1823" y="490" width="1" height="17" fill="#6e6e6e"/><rect x="1828" y="494" width="5" height="8" fill="#ff0000"/><rect x="1830" y="492" width="1" height="20" fill="#6e6e6e"/><rect x="1835" y="482" width="5" height="14" fill="#ff0000"/><rect x="1837" y="482" width="1" height="20" fill="#6e6e6e"/><rect x="1842" y="480" width="5" height="4" fill="#ff0000"/><rect x="1844" y="480" width="1" height="8" fill="#6e6e6e"/><rect x="1704" y="34" width="4" height="1" fill="#909090"/><rect x="1704" y="44" width="4" height="1" fill="#909090"/><rect x="1704" y="54" width="4" height="1" fill="#909090"/><rect x="1704" y="64" width="4" height="1" fill="#909090"/><rect x="1704" y="74" width="4" height="1" fill="#909090"/><rect x="1704" y="84" width="4" height="1" fill="#909090"/><rect x="1704" y="94" width="4" height="1" fill="#909090"/><rect x="1704" y="104" width="4" height="1" fill="#909090"/><rect x="1704" y="114" width="4" height="1" fill="#909090"/><rect x="1704" y="124" width="4" height="1" fill="#909090"/><rect x="1704" y="159" width="4" height="1" fill="#909090"/><rect x="1704" y="165" width="4" height="1" fill="#909090"/><rect x="1704" y="171" width="4" height="1" fill="#909090"/><rect x="1704" y="177" width="4" height="1" fill="#909090"/><rect x="1704" y="183" width="4" height="1" fill="#909090"/><rect x="1704" y="189" width="4" height="1" fill="#909090"/><rect x="1704" y="195" width="4" height="1" fill="#909090"/><rect x="1704" y="201" width="4" height="1" fill="#909090"/><rect x="1704" y="207" width="4" height="1" fill="#909090"/><rect x="1704" y="213" width="4" height="1" fill="#909090"/><rect x="1704" y="219" width="4" height="1" fill="#909090"/><rect x="1704" y="225" width="4" height="1" fill="#909090"/><rect x="1704" y="231" width="4" height="1" fill="#909090"/><rect x="1704" y="237" width="4" height="1" fill="#909090"/><rect x="1704" y="243" width="4" height="1" fill="#909090"/><rect x="1704" y="249" width="4" height="1" fill="#909090"/><rect x="1704" y="255" width="4" height="1" fill="#909090"/><rect x="1704" y="284" width="4" height="1" fill="#909090"/><rect x="1704" y="286" width="4" height="1" fill="#909090"/><rect x="1704" y="288" width="4" height="1" fill="#909090"/><rect x="1704" y="290" width="4" height="1" fill="#909090"/><rect x="1704" y="293" width="4" height="1" fill="#909090"/><rect x="1704" y="295" width="4" height="1" fill="#909090"/><rect x="1704" y="297" width="4" height="1" fill="#909090"/><rect x="1704" y="299" width="4" height="1" fill="#909090"/><rect x="1704" y="302" width="4" height="1" fill="#909090"/><rect x="1704" y="304" width="4" height="1" fill="#909090"/><rect x="1704" y="306" width="4" height="1" fill="#909090"/><rect x="1704" y="308" width="4" height="1" fill="#909090"/><rect x="1704" y="311" width="4" height="1" fill="#909090"/><rect x="1704" y="313" width="4" height="1" fill="#909090"/><rect x="1704" y="315" width="4" height="1" fill="#909090"/><rect x="1704" y="317" width="4" height="1" fill="#909090"/><rect x="1704" y="320" width="4" height="1" fill="#909090"/><rect x="1704" y="322" width="4" height="1" fill="#909090"/><rect x="1704" y="324" width="4" height="1" fill="#909090"/><rect x="1704" y="326" width="4" height="1" fill="#909090"/><rect x="1704" y="329" width="4" height="1" fill="#909090"/><rect x="1704" y="331" width="4" height="1" fill="#909090"/><rect x="1704" y="333" width="4" height="1" fill="#909090"/><rect x="1704" y="335" width="4" height="1" fill="#909090"/><rect x="1704" y="338" width="4" height="1" fill="#909090"/><rect x="1704" y="340" width="4" height="1" fill="#909090"/><rect x="1704" y="342" width="4" height="1" fill="#909090"/><rect x="1704" y="344" width="4" height="1" fill="#909090"/><rect x="1704" y="347" width="4" height="1" fill="#909090"/><rect x="1704" y="349" width="4" height="1" fill="#909090"/><rect x="1704" y="351" width="4" height="1" fill="#909090"/><rect x="1704" y="353" width="4" height="1" fill="#909090"/><rect x="1704" y="356" width="4" height="1" fill="#909090"/><rect x="1704" y="358" width="4" height="1" fill="#909090"/><rect x="1704" y="360" width="4" height="1" fill="#909090"/><rect x="1704" y="362" width="4" height="1" fill="#909090"/><rect x="1704" y="365" width="4" height="1" fill="#909090"/><rect x="1704" y="367" width="4" height="1" fill="#909090"/><rect x="1704" y="369" width="4" height="1" fill="#909090"/><rect x="1704" y="371" width="4" height="1" fill="#909090"/><rect x="1704" y="374" width="4" height="1" fill="#909090"/><rect x="1704" y="376" width="4" height="1" fill="#909090"/><rect x="1704" y="378" width="4" height="1" fill="#909090"/><rect x="1704" y="380" width="4" height="1" fill="#909090"/><rect x="1704" y="383" width="4" height="1" fill="#909090"/><rect x="0" y="3" width="1866" height="1" fill="#ffffff"/><rect x="1865" y="3" width="1" height="598" fill="#ffffff"/><rect x="0" y="600" width="1866" height="1" fill="#ffffff"/><rect x="1866" y="36" width="3" height="1" fill="#ffffff"/><rect x="1866" y="69" width="3" height="1" fill="#ffffff"/><rect x="1866" y="102" width="3" height="1" fill="#ffffff"/><rect x="1866" y="135" width="3" height="1" fill="#ffffff"/><rect x="1866" y="169" width="3" height="1" fill="#ffffff"/><rect x="1866" y="201" width="3" height="1" fill="#ffffff"/><rect x="1866" y="234" width="3" height="1" fill="#ffffff"/><rect x="1866" y="267" width="3" height="1" fill="#ffffff"/><rect x="1866" y="300" width="3" height="1" fill="#ffffff"/><rect x="1866" y="333" width="3" height="1" fill="#ffffff"/><rect x="1866" y="366" width="3" height="1" fill="#ffffff"/><rect x="1866" y="400" width="3" height="1" fill="#ffffff"/><rect x="1866" y="432" width="3" height="1" fill="#ffffff"/><rect x="1866" y="465" width="3" height="1" fill="#ffffff"/><rect x="1866" y="498" width="3" height="1" fill="#ffffff"/><rect x="1866" y="531" width="3" height="1" fill="#ffffff"/><rect x="1866" y="564" width="3" height="1" fill="#ffffff"/><rect x="1866" y="597" width="3" height="1" fill="#ffffff"/><rect x="62" y="600" width="1" height="5" fill="#ffffff"/><rect x="126" y="600" width="1" height="5" fill="#ffffff"/><rect x="190" y="600" width="1" height="5" fill="#ffffff"/><rect x="254" y="600" width="1" height="5" fill="#ffffff"/><rect x="318" y="600" width="1" height="5" fill="#ffffff"/><rect x="382" y="600" width="1" height="5" fill="#ffffff"/><rect x="446" y="600" width="1" height="5" fill="#ffffff"/><rect x="510" y="600" width="1" height="5" fill="#ffffff"/><rect x="574" y="600" width="1" height="5" fill="#ffffff"/><rect x="638" y="600" width="1" height="5" fill="#ffffff"/><rect x="702" y="600" width="1" height="5" fill="#ffffff"/><rect x="766" y="600" width="1" height="5" fill="#ffffff"/><rect x="830" y="600" width="1" height="5" fill="#ffffff"/><rect x="894" y="600" width="1" height="5" fill="#ffffff"/><rect x="958" y="600" width="1" height="5" fill="#ffffff"/><rect x="1022" y="600" width="1" height="5" fill="#ffffff"/><rect x="1086" y="600" width="1" height="5" fill="#ffffff"/><rect x="1150" y="600" width="1" height="5" fill="#ffffff"/><rect x="1214" y="600" width="1" height="5" fill="#ffffff"/><rect x="1278" y="600" width="1" height="5" fill="#ffffff"/><rect x="1342" y="600" width="1" height="5" fill="#ffffff"/><rect x="1406" y="600" width="1" height="5" fill="#ffffff"/><rect x="1470" y="600" width="1" height="5" fill="#ffffff"/><rect x="1867" y="75" width="41" height="7" fill="#ff0000"/><rect x="1867" y="82" width="41" height="11" fill="#ffffff"/><circle cx="1854.5" cy="12.5" r="5" fill="none" stroke="#fff" stroke-width="1"/><circle cx="1852.8" cy="11" r="0.8" fill="#fff"/><circle cx="1856.2" cy="11" r="0.8" fill="#fff"/><path d="M1852 13.8 Q1854.5 16.2 1857 13.8" stroke="#fff" fill="none" stroke-width="0.9"/><rect x="0" y="510" width="23" height="91" fill="#0000ff"/><path d="M2 554.5 H17 M13 551.5 L17 554.5 L13 557.5" stroke="#ff2020" stroke-width="1.3" fill="none"/><rect x="1494" y="90" width="93" height="1" fill="#ffffff"/><line x1="1509" y1="185.5" x2="1700" y2="185.5" stroke="#ffff00" stroke-width="1.2" stroke-dasharray="4.5 1.5"/><line x1="1509" y1="265.5" x2="1700" y2="265.5" stroke="#ffff00" stroke-width="1.2" stroke-dasharray="4.5 1.5"/><line x1="1509" y1="364.5" x2="1700" y2="364.5" stroke="#ffff00" stroke-width="1.2" stroke-dasharray="4.5 1.5"/><line x1="1509" y1="465.5" x2="1700" y2="465.5" stroke="#ffff00" stroke-width="1.2" stroke-dasharray="4.5 1.5"/><rect x="0" y="0" width="1911" height="1" fill="#808080"/><rect x="0" y="1" width="1911" height="2" fill="#000000"/><path d="M1485 3 L1495 3 L1490 8 Z" fill="#8090a0"/><rect x="0" y="621" width="1913" height="2" fill="#f8f8f8"/><rect x="0" y="623" width="1913" height="1" fill="#000000"/><rect x="0" y="624" width="1913" height="1" fill="#ffffff"/><rect x="1911" y="0" width="2" height="623" fill="#f8f8f8"/></svg>
<div class="t" style="left:13px;top:6.76px;font-size:9.5px;line-height:9.5px;color:#ffffff;">XAUUSD,M15</div><div class="t" style="left:99px;top:3.63px;font-size:10.5px;line-height:10.5px;color:#ffff00;">MTCommander统计</div><div class="t" style="left:4px;top:51.77px;font-size:9.5px;line-height:9.5px;color:#ffffff;">#1153303770 buy 0.30</div><div class="t" style="left:4px;top:60.77px;font-size:9.5px;line-height:9.5px;color:#ffffff;">#1153316318 tp</div><div class="t" style="left:4px;top:65.77px;font-size:9.5px;line-height:9.5px;color:#ffffff;">#1153303772 buy 2.00</div><div class="t" style="left:4px;top:67.77px;font-size:9.5px;line-height:9.5px;color:#ffffff;">#1153206023 buy 0.10</div><div class="t" style="left:4px;top:108.77px;font-size:9.5px;line-height:9.5px;color:#ffffff;">#1153316318 buy 0.30</div><div class="t" style="left:4px;top:165.76px;font-size:9.5px;line-height:9.5px;color:#ffffff;">#1153311442 buy 0.30</div><div class="t" style="left:4px;top:270.76px;font-size:9.5px;line-height:9.5px;color:#ffffff;">#1153309438 buy limit 0.30</div><div class="t" style="left:4px;top:281.76px;font-size:9.5px;line-height:9.5px;color:#ffffff;">#1153309492 buy limit 1.00</div><div class="t" style="left:4px;top:345.76px;font-size:9.5px;line-height:9.5px;color:#ffffff;">#1152900469 buy 0.10</div><div class="t" style="left:4px;top:353.76px;font-size:9.5px;line-height:9.5px;color:#ffffff;">#1153309756 buy limit 2.00</div><div class="t" style="left:4px;top:391.76px;font-size:9.5px;line-height:9.5px;color:#ffffff;">#1153239160 buy limit 0.3</div><div class="t" style="left:21px;top:535.76px;font-size:9.5px;line-height:9.5px;color:#ffffff;letter-spacing:-0.35px">52000000 sl</div><div class="t" style="left:22px;top:535.76px;font-size:9.5px;line-height:9.5px;color:#ffffff;letter-spacing:-0.35px">52889603</div><div style="position:absolute;left:0;top:510px;width:23px;height:90px;background:#0000ff"></div><svg style="position:absolute;left:0;top:548px" width="23" height="14"><path d="M2 6.5 H17.5" stroke="#ff0000" stroke-width="1.2"/><path d="M12.5 3 L15 5.2 L18 6.5 L15 7.8 L12.5 10 L13.5 6.5 Z" fill="#ff0000"/></svg><div class="t" style="left:1871px;top:31.77px;font-size:9.5px;line-height:9.5px;color:#ffffff;letter-spacing:-0.25px">1774.95</div><div class="t" style="left:1871px;top:64.77px;font-size:9.5px;line-height:9.5px;color:#ffffff;letter-spacing:-0.25px">1772.90</div><div class="t" style="left:1871px;top:97.77px;font-size:9.5px;line-height:9.5px;color:#ffffff;letter-spacing:-0.25px">1770.85</div><div class="t" style="left:1871px;top:130.76px;font-size:9.5px;line-height:9.5px;color:#ffffff;letter-spacing:-0.25px">1768.80</div><div class="t" style="left:1871px;top:164.76px;font-size:9.5px;line-height:9.5px;color:#ffffff;letter-spacing:-0.25px">1766.75</div><div class="t" style="left:1871px;top:196.76px;font-size:9.5px;line-height:9.5px;color:#ffffff;letter-spacing:-0.25px">1764.70</div><div class="t" style="left:1871px;top:229.76px;font-size:9.5px;line-height:9.5px;color:#ffffff;letter-spacing:-0.25px">1762.65</div><div class="t" style="left:1871px;top:262.76px;font-size:9.5px;line-height:9.5px;color:#ffffff;letter-spacing:-0.25px">1760.60</div><div class="t" style="left:1871px;top:295.76px;font-size:9.5px;line-height:9.5px;color:#ffffff;letter-spacing:-0.25px">1758.55</div><div class="t" style="left:1871px;top:328.76px;font-size:9.5px;line-height:9.5px;color:#ffffff;letter-spacing:-0.25px">1756.50</div><div class="t" style="left:1871px;top:361.76px;font-size:9.5px;line-height:9.5px;color:#ffffff;letter-spacing:-0.25px">1754.45</div><div class="t" style="left:1871px;top:395.76px;font-size:9.5px;line-height:9.5px;color:#ffffff;letter-spacing:-0.25px">1752.45</div><div class="t" style="left:1871px;top:427.76px;font-size:9.5px;line-height:9.5px;color:#ffffff;letter-spacing:-0.25px">1750.40</div><div class="t" style="left:1871px;top:460.76px;font-size:9.5px;line-height:9.5px;color:#ffffff;letter-spacing:-0.25px">1748.35</div><div class="t" style="left:1871px;top:493.76px;font-size:9.5px;line-height:9.5px;color:#ffffff;letter-spacing:-0.25px">1746.30</div><div class="t" style="left:1871px;top:526.76px;font-size:9.5px;line-height:9.5px;color:#ffffff;letter-spacing:-0.25px">1744.25</div><div class="t" style="left:1871px;top:559.76px;font-size:9.5px;line-height:9.5px;color:#ffffff;letter-spacing:-0.25px">1742.20</div><div class="t" style="left:1871px;top:592.76px;font-size:9.5px;line-height:9.5px;color:#ffffff;letter-spacing:-0.25px">1740.15</div><div class="t" style="left:1872px;top:73.77px;font-size:9.5px;line-height:9.5px;color:#400000;letter-spacing:-0.25px">1772.22</div><div class="t" style="left:1871px;top:82.77px;font-size:9.5px;line-height:9.5px;color:#000000;letter-spacing:-0.25px">1771.79</div><div class="t" style="left:-3px;top:603.97px;font-size:9.5px;line-height:9.5px;color:#ffffff;letter-spacing:-0.15px">28 Jul 2022</div><div class="t" style="left:61px;top:603.97px;font-size:9.5px;line-height:9.5px;color:#ffffff;letter-spacing:-0.15px">28 Jul 17:45</div><div class="t" style="left:125px;top:603.97px;font-size:9.5px;line-height:9.5px;color:#ffffff;letter-spacing:-0.15px">28 Jul 19:45</div><div class="t" style="left:189px;top:603.97px;font-size:9.5px;line-height:9.5px;color:#ffffff;letter-spacing:-0.15px">28 Jul 21:45</div><div class="t" style="left:253px;top:603.97px;font-size:9.5px;line-height:9.5px;color:#ffffff;letter-spacing:-0.15px">28 Jul 23:45</div><div class="t" style="left:317px;top:603.97px;font-size:9.5px;line-height:9.5px;color:#ffffff;letter-spacing:-0.15px">29 Jul 02:45</div><div class="t" style="left:381px;top:603.97px;font-size:9.5px;line-height:9.5px;color:#ffffff;letter-spacing:-0.15px">29 Jul 04:45</div><div class="t" style="left:445px;top:603.97px;font-size:9.5px;line-height:9.5px;color:#ffffff;letter-spacing:-0.15px">29 Jul 06:45</div><div class="t" style="left:509px;top:603.97px;font-size:9.5px;line-height:9.5px;color:#ffffff;letter-spacing:-0.15px">29 Jul 08:45</div><div class="t" style="left:573px;top:603.97px;font-size:9.5px;line-height:9.5px;color:#ffffff;letter-spacing:-0.15px">29 Jul 10:45</div><div class="t" style="left:637px;top:603.97px;font-size:9.5px;line-height:9.5px;color:#ffffff;letter-spacing:-0.15px">29 Jul 12:45</div><div class="t" style="left:701px;top:603.97px;font-size:9.5px;line-height:9.5px;color:#ffffff;letter-spacing:-0.15px">29 Jul 14:45</div><div class="t" style="left:765px;top:603.97px;font-size:9.5px;line-height:9.5px;color:#ffffff;letter-spacing:-0.15px">29 Jul 16:45</div><div class="t" style="left:829px;top:603.97px;font-size:9.5px;line-height:9.5px;color:#ffffff;letter-spacing:-0.15px">29 Jul 18:45</div><div class="t" style="left:893px;top:603.97px;font-size:9.5px;line-height:9.5px;color:#ffffff;letter-spacing:-0.15px">29 Jul 20:45</div><div class="t" style="left:957px;top:603.97px;font-size:9.5px;line-height:9.5px;color:#ffffff;letter-spacing:-0.15px">29 Jul 22:45</div><div class="t" style="left:1021px;top:603.97px;font-size:9.5px;line-height:9.5px;color:#ffffff;letter-spacing:-0.15px">1 Aug 01:45</div><div class="t" style="left:1085px;top:603.97px;font-size:9.5px;line-height:9.5px;color:#ffffff;letter-spacing:-0.15px">1 Aug 03:45</div><div class="t" style="left:1149px;top:603.97px;font-size:9.5px;line-height:9.5px;color:#ffffff;letter-spacing:-0.15px">1 Aug 05:45</div><div class="t" style="left:1213px;top:603.97px;font-size:9.5px;line-height:9.5px;color:#ffffff;letter-spacing:-0.15px">1 Aug 07:45</div><div class="t" style="left:1277px;top:603.97px;font-size:9.5px;line-height:9.5px;color:#ffffff;letter-spacing:-0.15px">1 Aug 09:45</div><div class="t" style="left:1341px;top:603.97px;font-size:9.5px;line-height:9.5px;color:#ffffff;letter-spacing:-0.15px">1 Aug 11:45</div><div class="t" style="left:1405px;top:603.97px;font-size:9.5px;line-height:9.5px;color:#ffffff;letter-spacing:-0.15px">1 Aug 13:45</div><div class="t" style="left:1469px;top:603.97px;font-size:9.5px;line-height:9.5px;color:#ffffff;letter-spacing:-0.15px">1 Aug 15:45</div><div class="t" style="left:1291px;top:5.94px;font-size:12px;line-height:12px;color:#ffffff;">北京</div><div class="t" style="left:1324px;top:6.47px;font-size:11.8px;line-height:11.8px;color:#ffffff;font-weight:bold">00:10</div><div class="t" style="left:1371px;top:5.94px;font-size:12px;line-height:12px;color:#ffffff;">悉尼</div><div class="t" style="left:1404px;top:6.47px;font-size:11.8px;line-height:11.8px;color:#ffffff;font-weight:bold">02:10</div><div class="t" style="left:1451px;top:5.94px;font-size:12px;line-height:12px;color:#ffffff;">东京</div><div class="t" style="left:1484px;top:6.47px;font-size:11.8px;line-height:11.8px;color:#ffffff;font-weight:bold">01:10</div><div class="t" style="left:1531px;top:5.94px;font-size:12px;line-height:12px;color:#ffffff;">欧洲</div><div class="t" style="left:1564px;top:6.47px;font-size:11.8px;line-height:11.8px;color:#ffffff;font-weight:bold">18:10</div><div class="t" style="left:1611px;top:5.94px;font-size:12px;line-height:12px;color:#ffffff;">伦敦</div><div class="t" style="left:1644px;top:6.47px;font-size:11.8px;line-height:11.8px;color:#ffffff;font-weight:bold">17:10</div><div class="t" style="left:1691px;top:5.94px;font-size:12px;line-height:12px;color:#00ff7f;">纽约</div><div class="t" style="left:1724px;top:6.47px;font-size:11.8px;line-height:11.8px;color:#00ff7f;font-weight:bold">12:10</div><div class="t" style="left:1757px;top:6.84px;font-size:8.9px;line-height:8.9px;color:#ffffff;">猎豹辅助交易系统1.34</div><div class="t" style="left:1635px;top:19.39px;font-size:12.4px;line-height:12.4px;color:#ffffff;">XAUUSD M15</div><div class="t" style="left:1643px;top:144.39px;font-size:12.4px;line-height:12.4px;color:#ffffff;">XAUUSD H1</div><div class="t" style="left:1643px;top:269.39px;font-size:12.4px;line-height:12.4px;color:#ffffff;">XAUUSD H4</div><div class="t" style="left:1639px;top:394.39px;font-size:12.4px;line-height:12.4px;color:#ffffff;">XAUUSD W1</div><div class="t" style="left:1500px;top:67.20px;font-size:21.5px;line-height:21.5px;color:#ff0000;letter-spacing:0.05px">1771.7900</div><div class="t" style="left:1500px;top:88.53px;font-size:19px;line-height:19px;color:#ff0000;letter-spacing:-0.5px">&lt;4:27</div><div class="t" style="left:1547px;top:93.05px;font-size:15px;line-height:15px;color:#ff8c00;letter-spacing:-0.3px">04:27</div><div class="t" style="left:1508px;top:157.25px;font-size:13.5px;line-height:13.5px;color:#ffff00;">账户详情:</div><div class="t" style="left:1508px;top:198.25px;font-size:13.5px;line-height:13.5px;color:#ffff00;">余额:53054.5&nbsp;&nbsp;&nbsp;&nbsp;净值:101825.3</div><div class="t" style="left:1508px;top:218.25px;font-size:13.5px;line-height:13.5px;color:#ffff00;">可用保证金:98652.35 USD</div><div class="t" style="left:1508px;top:238.25px;font-size:13.5px;line-height:13.5px;color:#ffff00;">强平比例:40%&nbsp;&nbsp;&nbsp;&nbsp;杠杆:1:1000</div><div class="t" style="left:1508px;top:278.25px;font-size:13.5px;line-height:13.5px;color:#ffff00;">多单单数:12</div><div class="t" style="left:1508px;top:298.25px;font-size:13.5px;line-height:13.5px;color:#ffff00;">多单手数:9.00</div><div class="t" style="left:1508px;top:318.25px;font-size:13.5px;line-height:13.5px;color:#ffff00;">多单盈亏:48560.45</div><div class="t" style="left:1508px;top:338.25px;font-size:13.5px;line-height:13.5px;color:#ffff00;">多单成本:1717.38</div><div class="t" style="left:1508px;top:378.25px;font-size:13.5px;line-height:13.5px;color:#ffff00;">空单单数:0</div><div class="t" style="left:1508px;top:398.25px;font-size:13.5px;line-height:13.5px;color:#ffff00;">空单手数:0.00</div><div class="t" style="left:1508px;top:418.25px;font-size:13.5px;line-height:13.5px;color:#ffff00;">空单盈亏:0.00</div><div class="t" style="left:1508px;top:438.25px;font-size:13.5px;line-height:13.5px;color:#ffff00;">空单成本:0.00</div><div class="t" style="left:1508px;top:478.25px;font-size:13.5px;line-height:13.5px;color:#ffff00;">平台时间:2022.08.01 16:10:33</div><div class="t" style="left:1508px;top:498.25px;font-size:13.5px;line-height:13.5px;color:#ffff00;">北京时间:2022.08.01 21:10:34</div>
<div style="position:absolute;left:106px;top:11px;width:430px;height:20px;background:#b0c4de;box-shadow:inset 0 0 0 1px #c4d6ee"></div>
<svg style="position:absolute;left:108px;top:14px" width="24" height="16"><path d="M4.5 3 V12 M8.5 3 V12 M4.5 7.5 H8.5" stroke="#e8102a" stroke-width="1.2" fill="none"/><path d="M18.5 4.2 Q17.5 3 15.5 3 Q13 3 13 5.2 Q13 7 15.8 7.6 Q18.8 8.2 18.8 10 Q18.8 12.2 15.8 12.2 Q13.5 12.2 12.8 10.8" stroke="#e8102a" stroke-width="1.2" fill="none"/><path d="M13.5 5.5 Q14.5 7.2 16.5 7.8" stroke="#303040" stroke-width="1.1" fill="none"/></svg>
<div class="t" style="left:134px;top:16px;font-size:9.2px;line-height:11px;color:#282838;letter-spacing:0.75px">猎豹趋势交易辅助系统<span style="font-size:10px;letter-spacing:0">V1.34</span></div>
<svg style="position:absolute;left:480px;top:11px" width="56" height="20">
<circle cx="11" cy="10" r="6.5" fill="#0050ff" stroke="#e8eef8" stroke-width="0.8"/>
<text x="11" y="14" font-size="10" font-weight="bold" fill="#fff" text-anchor="middle" font-family="Liberation Sans">?</text>
<path d="M25 9 L32 9 L28.5 13 Z" fill="#303030"/>
<path d="M41 6.5 L47 12.5 M47 6.5 L41 12.5" stroke="#303030" stroke-width="2"/>
</svg>
<div style="position:absolute;left:76px;top:4px;width:16px;height:12px;background:#2a2f38;border-radius:2px"></div>
<svg style="position:absolute;left:76px;top:4px" width="16" height="12" shape-rendering="crispEdges"><rect x="3" y="3" width="8" height="1" fill="#ffff00"/><rect x="6" y="1" width="1" height="7" fill="#ffff00"/></svg>
<svg style="position:absolute;left:0;top:8px" width="10" height="8"><path d="M1 2 L8 2 L4.5 6 Z" fill="#fff"/></svg>

<div class="t" style="left:2px;top:19.77px;font-size:9.5px;line-height:9.5px;letter-spacing:-0.12px;color:#fff">4 minutes 27 seconds left to bar end</div>
<div style="position:absolute;left:0;top:625px;width:1913px;height:277px;background:#f0f0f0"></div><div style="position:absolute;left:103px;top:624px;width:98px;height:16px;background:#fff;border:1px solid #000;border-top:none"></div><div class="t" style="left:10px;top:627px;font-size:12.2px;line-height:14px;color:#6d6d6d">XAUUSD,Daily</div><div class="t" style="left:113px;top:627px;font-size:12.2px;line-height:14px;color:#000">XAUUSD,M15</div><div class="t" style="left:214px;top:627px;font-size:12.2px;line-height:14px;color:#6d6d6d">XAUUSD,H1</div><div class="t" style="left:306px;top:627px;font-size:12.2px;line-height:14px;color:#6d6d6d">XAUUSD,H4</div><div class="t" style="left:399px;top:627px;font-size:12.2px;line-height:14px;color:#6d6d6d">EURUSD,H4</div><div class="t" style="left:490px;top:627px;font-size:12.2px;line-height:14px;color:#6d6d6d">EURUSD,M30</div><div class="t" style="left:591px;top:627px;font-size:12.2px;line-height:14px;color:#6d6d6d">EURUSD,H4</div><div class="t" style="left:681px;top:627px;font-size:12.2px;line-height:14px;color:#6d6d6d">XAUUSD,M30</div><div class="t" style="left:781px;top:627px;font-size:12.2px;line-height:14px;color:#6d6d6d">XAUUSD,M15</div><div class="t" style="left:882px;top:627px;font-size:12.2px;line-height:14px;color:#6d6d6d">XAUUSD,H1</div><div class="t" style="left:974px;top:627px;font-size:12.2px;line-height:14px;color:#6d6d6d">XAUUSD,H4</div><div class="t" style="left:1066px;top:627px;font-size:12.2px;line-height:14px;color:#6d6d6d">XAUUSD,Daily</div><div class="t" style="left:1170px;top:627px;font-size:12.2px;line-height:14px;color:#6d6d6d">XAUUSD,Daily</div><div class="t" style="left:1274px;top:627px;font-size:12.2px;line-height:14px;color:#6d6d6d">XAUUSD,Daily</div><div style="position:absolute;left:295px;top:627px;width:1px;height:12px;background:#909090"></div><div style="position:absolute;left:387px;top:627px;width:1px;height:12px;background:#909090"></div><div style="position:absolute;left:479px;top:627px;width:1px;height:12px;background:#909090"></div><div style="position:absolute;left:580px;top:627px;width:1px;height:12px;background:#909090"></div><div style="position:absolute;left:671px;top:627px;width:1px;height:12px;background:#909090"></div><div style="position:absolute;left:771px;top:627px;width:1px;height:12px;background:#909090"></div><div style="position:absolute;left:871px;top:627px;width:1px;height:12px;background:#909090"></div><div style="position:absolute;left:963px;top:627px;width:1px;height:12px;background:#909090"></div><div style="position:absolute;left:1055px;top:627px;width:1px;height:12px;background:#909090"></div><div style="position:absolute;left:1159px;top:627px;width:1px;height:12px;background:#909090"></div><div style="position:absolute;left:1263px;top:627px;width:1px;height:12px;background:#909090"></div><div style="position:absolute;left:1367px;top:627px;width:1px;height:12px;background:#909090"></div><div style="position:absolute;left:0;top:642px;width:1913px;height:2px;background:#fbfbfb"></div><svg style="position:absolute;left:1876px;top:626px" width="32" height="14"><path d="M9 3 L4 7 L9 11 Z" fill="#a0a0a0"/><path d="M23 3 L28 7 L23 11 Z" fill="#a0a0a0"/></svg><div style="position:absolute;left:0;top:661px;width:7px;height:230px;background:#d3dfed"></div><div class="t" style="left:-2px;top:647px;font-size:10px;line-height:12px;color:#000">×</div><div style="position:absolute;left:8px;top:647px;width:1902px;height:244px;background:#fff;border-top:1px solid #a0a0a0;border-left:1px solid #a0a0a0;box-sizing:border-box"></div><div class="t" style="left:15px;top:652px;font-size:12.5px;line-height:16px;color:#000">订单</div><div class="t" style="right:1465px;top:652px;font-size:12.5px;line-height:16px;color:#000">时间</div><div class="t" style="right:1335px;top:652px;font-size:12.5px;line-height:16px;color:#000">类型</div><div class="t" style="right:1235px;top:652px;font-size:12.5px;line-height:16px;color:#000">手数</div><div class="t" style="right:1107px;top:652px;font-size:12.5px;line-height:16px;color:#000">交易品种</div><div class="t" style="right:963px;top:652px;font-size:12.5px;line-height:16px;color:#000">价格</div><div class="t" style="right:820px;top:652px;font-size:12.5px;line-height:16px;color:#000">止损</div><div class="t" style="right:677px;top:652px;font-size:12.5px;line-height:16px;color:#000">止盈</div><div class="t" style="right:534px;top:652px;font-size:12.5px;line-height:16px;color:#000">价格</div><div class="t" style="right:391px;top:652px;font-size:12.5px;line-height:16px;color:#000">手续费</div><div class="t" style="right:248px;top:652px;font-size:12.5px;line-height:16px;color:#000">库存费</div><div class="t" style="right:47px;top:652px;font-size:12.5px;line-height:16px;color:#000">获利</div><div class="t" style="left:1877px;top:652px;font-size:11px;line-height:16px;color:#888">⁄</div><div style="position:absolute;left:193px;top:648px;width:1px;height:24px;background:#e0e0e0"></div><div style="position:absolute;left:451px;top:648px;width:1px;height:24px;background:#e0e0e0"></div><div style="position:absolute;left:581px;top:648px;width:1px;height:24px;background:#e0e0e0"></div><div style="position:absolute;left:681px;top:648px;width:1px;height:24px;background:#e0e0e0"></div><div style="position:absolute;left:809px;top:648px;width:1px;height:24px;background:#e0e0e0"></div><div style="position:absolute;left:953px;top:648px;width:1px;height:24px;background:#e0e0e0"></div><div style="position:absolute;left:1096px;top:648px;width:1px;height:24px;background:#e0e0e0"></div><div style="position:absolute;left:1239px;top:648px;width:1px;height:24px;background:#e0e0e0"></div><div style="position:absolute;left:1382px;top:648px;width:1px;height:24px;background:#e0e0e0"></div><div style="position:absolute;left:1525px;top:648px;width:1px;height:24px;background:#e0e0e0"></div><div style="position:absolute;left:1668px;top:648px;width:1px;height:24px;background:#e0e0e0"></div><div style="position:absolute;left:9px;top:672px;width:1883px;height:1px;background:#a8a8a8"></div><div style="position:absolute;left:9px;top:673px;width:1883px;height:20px;background:#ebebeb"></div><div style="position:absolute;left:9px;top:693px;width:1883px;height:1px;background:#c8c8c8"></div><div style="position:absolute;left:193px;top:673px;width:1px;height:20px;background:#d8d8d8"></div><div style="position:absolute;left:451px;top:673px;width:1px;height:20px;background:#d8d8d8"></div><div style="position:absolute;left:581px;top:673px;width:1px;height:20px;background:#d8d8d8"></div><div style="position:absolute;left:681px;top:673px;width:1px;height:20px;background:#d8d8d8"></div><div style="position:absolute;left:809px;top:673px;width:1px;height:20px;background:#d8d8d8"></div><div style="position:absolute;left:953px;top:673px;width:1px;height:20px;background:#d8d8d8"></div><div style="position:absolute;left:1096px;top:673px;width:1px;height:20px;background:#d8d8d8"></div><div style="position:absolute;left:1239px;top:673px;width:1px;height:20px;background:#d8d8d8"></div><div style="position:absolute;left:1382px;top:673px;width:1px;height:20px;background:#d8d8d8"></div><div style="position:absolute;left:1525px;top:673px;width:1px;height:20px;background:#d8d8d8"></div><div style="position:absolute;left:1668px;top:673px;width:1px;height:20px;background:#d8d8d8"></div><svg style="position:absolute;left:11px;top:675px" width="16" height="17"><path d="M1.5 1.5 H9 L12.5 5 V14.5 H1.5 Z" fill="#fafafa" stroke="#6a6a6a" stroke-width="1"/><path d="M9 1.5 V5 H12.5" fill="none" stroke="#6a6a6a"/><circle cx="11.5" cy="13" r="3.2" fill="#1e90ff" stroke="#0a5fc0" stroke-width="0.6"/></svg><div class="t" style="left:31px;top:675px;font-size:12.5px;line-height:16px;color:#000">1153309371</div><div class="t" style="right:1465px;top:675px;font-size:12.5px;line-height:16px;color:#000">2022.08.01 15:35:15</div><div class="t" style="right:1335px;top:675px;font-size:12.5px;line-height:16px;color:#000">buy</div><div class="t" style="right:1235px;top:675px;font-size:12.5px;line-height:16px;color:#000">0.30</div><div class="t" style="right:1107px;top:675px;font-size:12.5px;line-height:16px;color:#000">eurusd</div><div class="t" style="right:963px;top:675px;font-size:12.5px;line-height:16px;color:#000">1.02304</div><div class="t" style="right:820px;top:675px;font-size:12.5px;line-height:16px;color:#000">0.00000</div><div class="t" style="right:677px;top:675px;font-size:12.5px;line-height:16px;color:#000">0.00000</div><div class="t" style="right:534px;top:675px;font-size:12.5px;line-height:16px;color:#000">1.02411</div><div class="t" style="right:391px;top:675px;font-size:12.5px;line-height:16px;color:#000">0.00</div><div class="t" style="right:248px;top:675px;font-size:12.5px;line-height:16px;color:#000">0.00</div><div class="t" style="right:46px;top:675px;font-size:12.5px;line-height:16px;color:#000">32.10</div><svg style="position:absolute;left:1876px;top:678px" width="10" height="10"><path d="M1.5 1.5 L8.5 8.5 M8.5 1.5 L1.5 8.5" stroke="#8a8a8a" stroke-width="2"/></svg><div style="position:absolute;left:9px;top:694px;width:1883px;height:20px;background:#ffffff"></div><div style="position:absolute;left:193px;top:694px;width:1px;height:20px;background:#d8d8d8"></div><div style="position:absolute;left:451px;top:694px;width:1px;height:20px;background:#d8d8d8"></div><div style="position:absolute;left:581px;top:694px;width:1px;height:20px;background:#d8d8d8"></div><div style="position:absolute;left:681px;top:694px;width:1px;height:20px;background:#d8d8d8"></div><div style="position:absolute;left:809px;top:694px;width:1px;height:20px;background:#d8d8d8"></div><div style="position:absolute;left:953px;top:694px;width:1px;height:20px;background:#d8d8d8"></div><div style="position:absolute;left:1096px;top:694px;width:1px;height:20px;background:#d8d8d8"></div><div style="position:absolute;left:1239px;top:694px;width:1px;height:20px;background:#d8d8d8"></div><div style="position:absolute;left:1382px;top:694px;width:1px;height:20px;background:#d8d8d8"></div><div style="position:absolute;left:1525px;top:694px;width:1px;height:20px;background:#d8d8d8"></div><div style="position:absolute;left:1668px;top:694px;width:1px;height:20px;background:#d8d8d8"></div><svg style="position:absolute;left:11px;top:696px" width="16" height="17"><path d="M1.5 1.5 H9 L12.5 5 V14.5 H1.5 Z" fill="#fafafa" stroke="#6a6a6a" stroke-width="1"/><path d="M9 1.5 V5 H12.5" fill="none" stroke="#6a6a6a"/><circle cx="11.5" cy="13" r="3.2" fill="#1e90ff" stroke="#0a5fc0" stroke-width="0.6"/></svg><div class="t" style="left:31px;top:696px;font-size:12.5px;line-height:16px;color:#000">1153316318</div><div class="t" style="right:1465px;top:696px;font-size:12.5px;line-height:16px;color:#000">2022.08.01 16:00:59</div><div class="t" style="right:1335px;top:696px;font-size:12.5px;line-height:16px;color:#000">buy</div><div class="t" style="right:1235px;top:696px;font-size:12.5px;line-height:16px;color:#000">0.30</div><div class="t" style="right:1107px;top:696px;font-size:12.5px;line-height:16px;color:#000">xauusd</div><div class="t" style="right:963px;top:696px;font-size:12.5px;line-height:16px;color:#000">1769.81</div><div class="t" style="right:820px;top:696px;font-size:12.5px;line-height:16px;color:#000">0.00</div><div class="t" style="right:677px;top:696px;font-size:12.5px;line-height:16px;color:#000">1772.80</div><div class="t" style="right:534px;top:696px;font-size:12.5px;line-height:16px;color:#000">1771.81</div><div class="t" style="right:391px;top:696px;font-size:12.5px;line-height:16px;color:#000">0.00</div><div class="t" style="right:248px;top:696px;font-size:12.5px;line-height:16px;color:#000">0.00</div><div class="t" style="right:46px;top:696px;font-size:12.5px;line-height:16px;color:#000">60.00</div><svg style="position:absolute;left:1876px;top:699px" width="10" height="10"><path d="M1.5 1.5 L8.5 8.5 M8.5 1.5 L1.5 8.5" stroke="#8a8a8a" stroke-width="2"/></svg><div style="position:absolute;left:9px;top:714px;width:1883px;height:22px;background:#0078d7"></div><div style="position:absolute;left:193px;top:715px;width:1px;height:20px;background:#e0e0e0"></div><div style="position:absolute;left:451px;top:715px;width:1px;height:20px;background:#e0e0e0"></div><div style="position:absolute;left:581px;top:715px;width:1px;height:20px;background:#e0e0e0"></div><div style="position:absolute;left:681px;top:715px;width:1px;height:20px;background:#e0e0e0"></div><div style="position:absolute;left:809px;top:715px;width:1px;height:20px;background:#e0e0e0"></div><div style="position:absolute;left:953px;top:715px;width:1px;height:20px;background:#e0e0e0"></div><div style="position:absolute;left:1096px;top:715px;width:1px;height:20px;background:#e0e0e0"></div><div style="position:absolute;left:1239px;top:715px;width:1px;height:20px;background:#e0e0e0"></div><div style="position:absolute;left:1382px;top:715px;width:1px;height:20px;background:#e0e0e0"></div><div style="position:absolute;left:1525px;top:715px;width:1px;height:20px;background:#e0e0e0"></div><div style="position:absolute;left:1668px;top:715px;width:1px;height:20px;background:#e0e0e0"></div><svg style="position:absolute;left:11px;top:717px" width="16" height="17"><path d="M1.5 1.5 H9 L12.5 5 V14.5 H1.5 Z" fill="#fafafa" stroke="#6a6a6a" stroke-width="1"/><path d="M9 1.5 V5 H12.5" fill="none" stroke="#6a6a6a"/><circle cx="11.5" cy="13" r="3.2" fill="#1e90ff" stroke="#0a5fc0" stroke-width="0.6"/></svg><div class="t" style="left:31px;top:717px;font-size:12.5px;line-height:16px;color:#fff">1153311442</div><div class="t" style="right:1465px;top:717px;font-size:12.5px;line-height:16px;color:#fff">2022.08.01 15:43:19</div><div class="t" style="right:1335px;top:717px;font-size:12.5px;line-height:16px;color:#fff">buy</div><div class="t" style="right:1235px;top:717px;font-size:12.5px;line-height:16px;color:#fff">0.30</div><div class="t" style="right:1107px;top:717px;font-size:12.5px;line-height:16px;color:#fff">xauusd</div><div class="t" style="right:963px;top:717px;font-size:12.5px;line-height:16px;color:#fff">1766.29</div><div class="t" style="right:820px;top:717px;font-size:12.5px;line-height:16px;color:#fff">0.00</div><div class="t" style="right:677px;top:717px;font-size:12.5px;line-height:16px;color:#fff">0.00</div><div class="t" style="right:534px;top:717px;font-size:12.5px;line-height:16px;color:#fff">1771.81</div><div class="t" style="right:391px;top:717px;font-size:12.5px;line-height:16px;color:#fff">0.00</div><div class="t" style="right:248px;top:717px;font-size:12.5px;line-height:16px;color:#fff">0.00</div><div class="t" style="right:46px;top:717px;font-size:12.5px;line-height:16px;color:#fff">165.60</div><svg style="position:absolute;left:1876px;top:720px" width="10" height="10"><path d="M1.5 1.5 L8.5 8.5 M8.5 1.5 L1.5 8.5" stroke="#fff" stroke-width="2"/></svg><div style="position:absolute;left:9px;top:736px;width:1883px;height:20px;background:#ffffff"></div><div style="position:absolute;left:9px;top:756px;width:1883px;height:1px;background:#c8c8c8"></div><div style="position:absolute;left:193px;top:736px;width:1px;height:20px;background:#d8d8d8"></div><div style="position:absolute;left:451px;top:736px;width:1px;height:20px;background:#d8d8d8"></div><div style="position:absolute;left:581px;top:736px;width:1px;height:20px;background:#d8d8d8"></div><div style="position:absolute;left:681px;top:736px;width:1px;height:20px;background:#d8d8d8"></div><div style="position:absolute;left:809px;top:736px;width:1px;height:20px;background:#d8d8d8"></div><div style="position:absolute;left:953px;top:736px;width:1px;height:20px;background:#d8d8d8"></div><div style="position:absolute;left:1096px;top:736px;width:1px;height:20px;background:#d8d8d8"></div><div style="position:absolute;left:1239px;top:736px;width:1px;height:20px;background:#d8d8d8"></div><div style="position:absolute;left:1382px;top:736px;width:1px;height:20px;background:#d8d8d8"></div><div style="position:absolute;left:1525px;top:736px;width:1px;height:20px;background:#d8d8d8"></div><div style="position:absolute;left:1668px;top:736px;width:1px;height:20px;background:#d8d8d8"></div><svg style="position:absolute;left:11px;top:738px" width="16" height="17"><path d="M1.5 1.5 H9 L12.5 5 V14.5 H1.5 Z" fill="#fafafa" stroke="#6a6a6a" stroke-width="1"/><path d="M9 1.5 V5 H12.5" fill="none" stroke="#6a6a6a"/><circle cx="11.5" cy="13" r="3.2" fill="#1e90ff" stroke="#0a5fc0" stroke-width="0.6"/></svg><div class="t" style="left:31px;top:738px;font-size:12.5px;line-height:16px;color:#000">1152900469</div><div class="t" style="right:1465px;top:738px;font-size:12.5px;line-height:16px;color:#000">2022.07.28 17:53:23</div><div class="t" style="right:1335px;top:738px;font-size:12.5px;line-height:16px;color:#000">buy</div><div class="t" style="right:1235px;top:738px;font-size:12.5px;line-height:16px;color:#000">0.10</div><div class="t" style="right:1107px;top:738px;font-size:12.5px;line-height:16px;color:#000">xauusd</div><div class="t" style="right:963px;top:738px;font-size:12.5px;line-height:16px;color:#000">1755.19</div><div class="t" style="right:820px;top:738px;font-size:12.5px;line-height:16px;color:#000">0.00</div><div class="t" style="right:677px;top:738px;font-size:12.5px;line-height:16px;color:#000">1801.30</div><div class="t" style="right:534px;top:738px;font-size:12.5px;line-height:16px;color:#000">1771.81</div><div class="t" style="right:391px;top:738px;font-size:12.5px;line-height:16px;color:#000">0.00</div><div class="t" style="right:248px;top:738px;font-size:12.5px;line-height:16px;color:#000">-1.70</div><div class="t" style="right:46px;top:738px;font-size:12.5px;line-height:16px;color:#000">166.20</div><svg style="position:absolute;left:1876px;top:741px" width="10" height="10"><path d="M1.5 1.5 L8.5 8.5 M8.5 1.5 L1.5 8.5" stroke="#8a8a8a" stroke-width="2"/></svg><div style="position:absolute;left:9px;top:757px;width:1883px;height:20px;background:#ebebeb"></div><div style="position:absolute;left:9px;top:777px;width:1883px;height:1px;background:#c8c8c8"></div><div style="position:absolute;left:193px;top:757px;width:1px;height:20px;background:#d8d8d8"></div><div style="position:absolute;left:451px;top:757px;width:1px;height:20px;background:#d8d8d8"></div><div style="position:absolute;left:581px;top:757px;width:1px;height:20px;background:#d8d8d8"></div><div style="position:absolute;left:681px;top:757px;width:1px;height:20px;background:#d8d8d8"></div><div style="position:absolute;left:809px;top:757px;width:1px;height:20px;background:#d8d8d8"></div><div style="position:absolute;left:953px;top:757px;width:1px;height:20px;background:#d8d8d8"></div><div style="position:absolute;left:1096px;top:757px;width:1px;height:20px;background:#d8d8d8"></div><div style="position:absolute;left:1239px;top:757px;width:1px;height:20px;background:#d8d8d8"></div><div style="position:absolute;left:1382px;top:757px;width:1px;height:20px;background:#d8d8d8"></div><div style="position:absolute;left:1525px;top:757px;width:1px;height:20px;background:#d8d8d8"></div><div style="position:absolute;left:1668px;top:757px;width:1px;height:20px;background:#d8d8d8"></div><svg style="position:absolute;left:11px;top:759px" width="16" height="17"><path d="M1.5 1.5 H9 L12.5 5 V14.5 H1.5 Z" fill="#fafafa" stroke="#6a6a6a" stroke-width="1"/><path d="M9 1.5 V5 H12.5" fill="none" stroke="#6a6a6a"/><circle cx="11.5" cy="13" r="3.2" fill="#1e90ff" stroke="#0a5fc0" stroke-width="0.6"/></svg><div class="t" style="left:31px;top:759px;font-size:12.5px;line-height:16px;color:#000">1152881426</div><div class="t" style="right:1465px;top:759px;font-size:12.5px;line-height:16px;color:#000">2022.07.28 11:10:50</div><div class="t" style="right:1335px;top:759px;font-size:12.5px;line-height:16px;color:#000">buy</div><div class="t" style="right:1235px;top:759px;font-size:12.5px;line-height:16px;color:#000">0.50</div><div class="t" style="right:1107px;top:759px;font-size:12.5px;line-height:16px;color:#000">eurusd</div><div class="t" style="right:963px;top:759px;font-size:12.5px;line-height:16px;color:#000">1.02041</div><div class="t" style="right:820px;top:759px;font-size:12.5px;line-height:16px;color:#000">1.00940</div><div class="t" style="right:677px;top:759px;font-size:12.5px;line-height:16px;color:#000">0.00000</div><div class="t" style="right:534px;top:759px;font-size:12.5px;line-height:16px;color:#000">1.02411</div><div class="t" style="right:391px;top:759px;font-size:12.5px;line-height:16px;color:#000">0.00</div><div class="t" style="right:248px;top:759px;font-size:12.5px;line-height:16px;color:#000">-6.70</div><div class="t" style="right:46px;top:759px;font-size:12.5px;line-height:16px;color:#000">185.00</div><svg style="position:absolute;left:1876px;top:762px" width="10" height="10"><path d="M1.5 1.5 L8.5 8.5 M8.5 1.5 L1.5 8.5" stroke="#8a8a8a" stroke-width="2"/></svg><div style="position:absolute;left:9px;top:778px;width:1883px;height:20px;background:#ffffff"></div><div style="position:absolute;left:9px;top:798px;width:1883px;height:1px;background:#c8c8c8"></div><div style="position:absolute;left:193px;top:778px;width:1px;height:20px;background:#d8d8d8"></div><div style="position:absolute;left:451px;top:778px;width:1px;height:20px;background:#d8d8d8"></div><div style="position:absolute;left:581px;top:778px;width:1px;height:20px;background:#d8d8d8"></div><div style="position:absolute;left:681px;top:778px;width:1px;height:20px;background:#d8d8d8"></div><div style="position:absolute;left:809px;top:778px;width:1px;height:20px;background:#d8d8d8"></div><div style="position:absolute;left:953px;top:778px;width:1px;height:20px;background:#d8d8d8"></div><div style="position:absolute;left:1096px;top:778px;width:1px;height:20px;background:#d8d8d8"></div><div style="position:absolute;left:1239px;top:778px;width:1px;height:20px;background:#d8d8d8"></div><div style="position:absolute;left:1382px;top:778px;width:1px;height:20px;background:#d8d8d8"></div><div style="position:absolute;left:1525px;top:778px;width:1px;height:20px;background:#d8d8d8"></div><div style="position:absolute;left:1668px;top:778px;width:1px;height:20px;background:#d8d8d8"></div><svg style="position:absolute;left:11px;top:780px" width="16" height="17"><path d="M1.5 1.5 H9 L12.5 5 V14.5 H1.5 Z" fill="#fafafa" stroke="#6a6a6a" stroke-width="1"/><path d="M9 1.5 V5 H12.5" fill="none" stroke="#6a6a6a"/><circle cx="11.5" cy="13" r="3.2" fill="#1e90ff" stroke="#0a5fc0" stroke-width="0.6"/></svg><div class="t" style="left:31px;top:780px;font-size:12.5px;line-height:16px;color:#000">1152873564</div><div class="t" style="right:1465px;top:780px;font-size:12.5px;line-height:16px;color:#000">2022.07.28 07:30:51</div><div class="t" style="right:1335px;top:780px;font-size:12.5px;line-height:16px;color:#000">buy</div><div class="t" style="right:1235px;top:780px;font-size:12.5px;line-height:16px;color:#000">0.10</div><div class="t" style="right:1107px;top:780px;font-size:12.5px;line-height:16px;color:#000">xauusd</div><div class="t" style="right:963px;top:780px;font-size:12.5px;line-height:16px;color:#000">1737.01</div><div class="t" style="right:820px;top:780px;font-size:12.5px;line-height:16px;color:#000">1743.31</div><div class="t" style="right:677px;top:780px;font-size:12.5px;line-height:16px;color:#000">0.00</div><div class="t" style="right:534px;top:780px;font-size:12.5px;line-height:16px;color:#000">1771.81</div><div class="t" style="right:391px;top:780px;font-size:12.5px;line-height:16px;color:#000">0.00</div><div class="t" style="right:248px;top:780px;font-size:12.5px;line-height:16px;color:#000">-1.70</div><div class="t" style="right:46px;top:780px;font-size:12.5px;line-height:16px;color:#000">348.00</div><svg style="position:absolute;left:1876px;top:783px" width="10" height="10"><path d="M1.5 1.5 L8.5 8.5 M8.5 1.5 L1.5 8.5" stroke="#8a8a8a" stroke-width="2"/></svg><div style="position:absolute;left:9px;top:799px;width:1883px;height:20px;background:#ebebeb"></div><div style="position:absolute;left:9px;top:819px;width:1883px;height:1px;background:#c8c8c8"></div><div style="position:absolute;left:193px;top:799px;width:1px;height:20px;background:#d8d8d8"></div><div style="position:absolute;left:451px;top:799px;width:1px;height:20px;background:#d8d8d8"></div><div style="position:absolute;left:581px;top:799px;width:1px;height:20px;background:#d8d8d8"></div><div style="position:absolute;left:681px;top:799px;width:1px;height:20px;background:#d8d8d8"></div><div style="position:absolute;left:809px;top:799px;width:1px;height:20px;background:#d8d8d8"></div><div style="position:absolute;left:953px;top:799px;width:1px;height:20px;background:#d8d8d8"></div><div style="position:absolute;left:1096px;top:799px;width:1px;height:20px;background:#d8d8d8"></div><div style="position:absolute;left:1239px;top:799px;width:1px;height:20px;background:#d8d8d8"></div><div style="position:absolute;left:1382px;top:799px;width:1px;height:20px;background:#d8d8d8"></div><div style="position:absolute;left:1525px;top:799px;width:1px;height:20px;background:#d8d8d8"></div><div style="position:absolute;left:1668px;top:799px;width:1px;height:20px;background:#d8d8d8"></div><svg style="position:absolute;left:11px;top:801px" width="16" height="17"><path d="M1.5 1.5 H9 L12.5 5 V14.5 H1.5 Z" fill="#fafafa" stroke="#6a6a6a" stroke-width="1"/><path d="M9 1.5 V5 H12.5" fill="none" stroke="#6a6a6a"/><circle cx="11.5" cy="13" r="3.2" fill="#1e90ff" stroke="#0a5fc0" stroke-width="0.6"/></svg><div class="t" style="left:31px;top:801px;font-size:12.5px;line-height:16px;color:#000">1152900625</div><div class="t" style="right:1465px;top:801px;font-size:12.5px;line-height:16px;color:#000">2022.07.28 09:03:39</div><div class="t" style="right:1335px;top:801px;font-size:12.5px;line-height:16px;color:#000">buy</div><div class="t" style="right:1235px;top:801px;font-size:12.5px;line-height:16px;color:#000">0.30</div><div class="t" style="right:1107px;top:801px;font-size:12.5px;line-height:16px;color:#000">xauusd</div><div class="t" style="right:963px;top:801px;font-size:12.5px;line-height:16px;color:#000">1739.40</div><div class="t" style="right:820px;top:801px;font-size:12.5px;line-height:16px;color:#000">1743.31</div><div class="t" style="right:677px;top:801px;font-size:12.5px;line-height:16px;color:#000">0.00</div><div class="t" style="right:534px;top:801px;font-size:12.5px;line-height:16px;color:#000">1771.81</div><div class="t" style="right:391px;top:801px;font-size:12.5px;line-height:16px;color:#000">0.00</div><div class="t" style="right:248px;top:801px;font-size:12.5px;line-height:16px;color:#000">-5.10</div><div class="t" style="right:46px;top:801px;font-size:12.5px;line-height:16px;color:#000">972.30</div><svg style="position:absolute;left:1876px;top:804px" width="10" height="10"><path d="M1.5 1.5 L8.5 8.5 M8.5 1.5 L1.5 8.5" stroke="#8a8a8a" stroke-width="2"/></svg><div style="position:absolute;left:9px;top:820px;width:1883px;height:20px;background:#ffffff"></div><div style="position:absolute;left:9px;top:840px;width:1883px;height:1px;background:#c8c8c8"></div><div style="position:absolute;left:193px;top:820px;width:1px;height:20px;background:#d8d8d8"></div><div style="position:absolute;left:451px;top:820px;width:1px;height:20px;background:#d8d8d8"></div><div style="position:absolute;left:581px;top:820px;width:1px;height:20px;background:#d8d8d8"></div><div style="position:absolute;left:681px;top:820px;width:1px;height:20px;background:#d8d8d8"></div><div style="position:absolute;left:809px;top:820px;width:1px;height:20px;background:#d8d8d8"></div><div style="position:absolute;left:953px;top:820px;width:1px;height:20px;background:#d8d8d8"></div><div style="position:absolute;left:1096px;top:820px;width:1px;height:20px;background:#d8d8d8"></div><div style="position:absolute;left:1239px;top:820px;width:1px;height:20px;background:#d8d8d8"></div><div style="position:absolute;left:1382px;top:820px;width:1px;height:20px;background:#d8d8d8"></div><div style="position:absolute;left:1525px;top:820px;width:1px;height:20px;background:#d8d8d8"></div><div style="position:absolute;left:1668px;top:820px;width:1px;height:20px;background:#d8d8d8"></div><svg style="position:absolute;left:11px;top:822px" width="16" height="17"><path d="M1.5 1.5 H9 L12.5 5 V14.5 H1.5 Z" fill="#fafafa" stroke="#6a6a6a" stroke-width="1"/><path d="M9 1.5 V5 H12.5" fill="none" stroke="#6a6a6a"/><circle cx="11.5" cy="13" r="3.2" fill="#1e90ff" stroke="#0a5fc0" stroke-width="0.6"/></svg><div class="t" style="left:31px;top:822px;font-size:12.5px;line-height:16px;color:#000">1152849207</div><div class="t" style="right:1465px;top:822px;font-size:12.5px;line-height:16px;color:#000">2022.07.27 16:57:12</div><div class="t" style="right:1335px;top:822px;font-size:12.5px;line-height:16px;color:#000">buy</div><div class="t" style="right:1235px;top:822px;font-size:12.5px;line-height:16px;color:#000">0.50</div><div class="t" style="right:1107px;top:822px;font-size:12.5px;line-height:16px;color:#000">xauusd</div><div class="t" style="right:963px;top:822px;font-size:12.5px;line-height:16px;color:#000">1713.96</div><div class="t" style="right:820px;top:822px;font-size:12.5px;line-height:16px;color:#000">1743.31</div><div class="t" style="right:677px;top:822px;font-size:12.5px;line-height:16px;color:#000">0.00</div><div class="t" style="right:534px;top:822px;font-size:12.5px;line-height:16px;color:#000">1771.81</div><div class="t" style="right:391px;top:822px;font-size:12.5px;line-height:16px;color:#000">0.00</div><div class="t" style="right:248px;top:822px;font-size:12.5px;line-height:16px;color:#000">-21.25</div><div class="t" style="right:46px;top:822px;font-size:12.5px;line-height:16px;color:#000">2 892.50</div><svg style="position:absolute;left:1876px;top:825px" width="10" height="10"><path d="M1.5 1.5 L8.5 8.5 M8.5 1.5 L1.5 8.5" stroke="#8a8a8a" stroke-width="2"/></svg><div style="position:absolute;left:9px;top:841px;width:1883px;height:20px;background:#ebebeb"></div><div style="position:absolute;left:9px;top:861px;width:1883px;height:1px;background:#c8c8c8"></div><div style="position:absolute;left:193px;top:841px;width:1px;height:20px;background:#d8d8d8"></div><div style="position:absolute;left:451px;top:841px;width:1px;height:20px;background:#d8d8d8"></div><div style="position:absolute;left:581px;top:841px;width:1px;height:20px;background:#d8d8d8"></div><div style="position:absolute;left:681px;top:841px;width:1px;height:20px;background:#d8d8d8"></div><div style="position:absolute;left:809px;top:841px;width:1px;height:20px;background:#d8d8d8"></div><div style="position:absolute;left:953px;top:841px;width:1px;height:20px;background:#d8d8d8"></div><div style="position:absolute;left:1096px;top:841px;width:1px;height:20px;background:#d8d8d8"></div><div style="position:absolute;left:1239px;top:841px;width:1px;height:20px;background:#d8d8d8"></div><div style="position:absolute;left:1382px;top:841px;width:1px;height:20px;background:#d8d8d8"></div><div style="position:absolute;left:1525px;top:841px;width:1px;height:20px;background:#d8d8d8"></div><div style="position:absolute;left:1668px;top:841px;width:1px;height:20px;background:#d8d8d8"></div><svg style="position:absolute;left:11px;top:843px" width="16" height="17"><path d="M1.5 1.5 H9 L12.5 5 V14.5 H1.5 Z" fill="#fafafa" stroke="#6a6a6a" stroke-width="1"/><path d="M9 1.5 V5 H12.5" fill="none" stroke="#6a6a6a"/><circle cx="11.5" cy="13" r="3.2" fill="#1e90ff" stroke="#0a5fc0" stroke-width="0.6"/></svg><div class="t" style="left:31px;top:843px;font-size:12.5px;line-height:16px;color:#000">1152760786</div><div class="t" style="right:1465px;top:843px;font-size:12.5px;line-height:16px;color:#000">2022.07.21 12:22:48</div><div class="t" style="right:1335px;top:843px;font-size:12.5px;line-height:16px;color:#000">buy</div><div class="t" style="right:1235px;top:843px;font-size:12.5px;line-height:16px;color:#000">1.00</div><div class="t" style="right:1107px;top:843px;font-size:12.5px;line-height:16px;color:#000">xauusd</div><div class="t" style="right:963px;top:843px;font-size:12.5px;line-height:16px;color:#000">1683.43</div><div class="t" style="right:820px;top:843px;font-size:12.5px;line-height:16px;color:#000">1710.43</div><div class="t" style="right:677px;top:843px;font-size:12.5px;line-height:16px;color:#000">0.00</div><div class="t" style="right:534px;top:843px;font-size:12.5px;line-height:16px;color:#000">1771.81</div><div class="t" style="right:391px;top:843px;font-size:12.5px;line-height:16px;color:#000">0.00</div><div class="t" style="right:248px;top:843px;font-size:12.5px;line-height:16px;color:#000">-76.50</div><div class="t" style="right:46px;top:843px;font-size:12.5px;line-height:16px;color:#000">8 838.00</div><svg style="position:absolute;left:1876px;top:846px" width="10" height="10"><path d="M1.5 1.5 L8.5 8.5 M8.5 1.5 L1.5 8.5" stroke="#8a8a8a" stroke-width="2"/></svg><div style="position:absolute;left:9px;top:862px;width:1883px;height:20px;background:#ffffff"></div><div style="position:absolute;left:9px;top:882px;width:1883px;height:1px;background:#c8c8c8"></div><div style="position:absolute;left:193px;top:862px;width:1px;height:20px;background:#d8d8d8"></div><div style="position:absolute;left:451px;top:862px;width:1px;height:20px;background:#d8d8d8"></div><div style="position:absolute;left:581px;top:862px;width:1px;height:20px;background:#d8d8d8"></div><div style="position:absolute;left:681px;top:862px;width:1px;height:20px;background:#d8d8d8"></div><div style="position:absolute;left:809px;top:862px;width:1px;height:20px;background:#d8d8d8"></div><div style="position:absolute;left:953px;top:862px;width:1px;height:20px;background:#d8d8d8"></div><div style="position:absolute;left:1096px;top:862px;width:1px;height:20px;background:#d8d8d8"></div><div style="position:absolute;left:1239px;top:862px;width:1px;height:20px;background:#d8d8d8"></div><div style="position:absolute;left:1382px;top:862px;width:1px;height:20px;background:#d8d8d8"></div><div style="position:absolute;left:1525px;top:862px;width:1px;height:20px;background:#d8d8d8"></div><div style="position:absolute;left:1668px;top:862px;width:1px;height:20px;background:#d8d8d8"></div><svg style="position:absolute;left:11px;top:864px" width="16" height="17"><path d="M1.5 1.5 H9 L12.5 5 V14.5 H1.5 Z" fill="#fafafa" stroke="#6a6a6a" stroke-width="1"/><path d="M9 1.5 V5 H12.5" fill="none" stroke="#6a6a6a"/><circle cx="11.5" cy="13" r="3.2" fill="#1e90ff" stroke="#0a5fc0" stroke-width="0.6"/></svg><div class="t" style="left:31px;top:864px;font-size:12.5px;line-height:16px;color:#000">1152700884</div><div class="t" style="right:1465px;top:864px;font-size:12.5px;line-height:16px;color:#000">2022.07.21 13:08:21</div><div class="t" style="right:1335px;top:864px;font-size:12.5px;line-height:16px;color:#000">buy</div><div class="t" style="right:1235px;top:864px;font-size:12.5px;line-height:16px;color:#000">2.00</div><div class="t" style="right:1107px;top:864px;font-size:12.5px;line-height:16px;color:#000">xauusd</div><div class="t" style="right:963px;top:864px;font-size:12.5px;line-height:16px;color:#000">1683.12</div><div class="t" style="right:820px;top:864px;font-size:12.5px;line-height:16px;color:#000">1710.43</div><div class="t" style="right:677px;top:864px;font-size:12.5px;line-height:16px;color:#000">0.00</div><div class="t" style="right:534px;top:864px;font-size:12.5px;line-height:16px;color:#000">1771.81</div><div class="t" style="right:391px;top:864px;font-size:12.5px;line-height:16px;color:#000">0.00</div><div class="t" style="right:248px;top:864px;font-size:12.5px;line-height:16px;color:#000">-153.00</div><div class="t" style="right:46px;top:864px;font-size:12.5px;line-height:16px;color:#000">17 738.00</div><svg style="position:absolute;left:1876px;top:867px" width="10" height="10"><path d="M1.5 1.5 L8.5 8.5 M8.5 1.5 L1.5 8.5" stroke="#8a8a8a" stroke-width="2"/></svg><div style="position:absolute;left:9px;top:883px;width:1883px;height:18px;background:#ebebeb"></div><div style="position:absolute;left:9px;top:903px;width:1883px;height:1px;background:#c8c8c8"></div><div style="position:absolute;left:193px;top:883px;width:1px;height:20px;background:#d8d8d8"></div><div style="position:absolute;left:451px;top:883px;width:1px;height:20px;background:#d8d8d8"></div><div style="position:absolute;left:581px;top:883px;width:1px;height:20px;background:#d8d8d8"></div><div style="position:absolute;left:681px;top:883px;width:1px;height:20px;background:#d8d8d8"></div><div style="position:absolute;left:809px;top:883px;width:1px;height:20px;background:#d8d8d8"></div><div style="position:absolute;left:953px;top:883px;width:1px;height:20px;background:#d8d8d8"></div><div style="position:absolute;left:1096px;top:883px;width:1px;height:20px;background:#d8d8d8"></div><div style="position:absolute;left:1239px;top:883px;width:1px;height:20px;background:#d8d8d8"></div><div style="position:absolute;left:1382px;top:883px;width:1px;height:20px;background:#d8d8d8"></div><div style="position:absolute;left:1525px;top:883px;width:1px;height:20px;background:#d8d8d8"></div><div style="position:absolute;left:1668px;top:883px;width:1px;height:20px;background:#d8d8d8"></div><svg style="position:absolute;left:11px;top:885px" width="16" height="17"><path d="M1.5 1.5 H9 L12.5 5 V14.5 H1.5 Z" fill="#fafafa" stroke="#6a6a6a" stroke-width="1"/><path d="M9 1.5 V5 H12.5" fill="none" stroke="#6a6a6a"/><circle cx="11.5" cy="13" r="3.2" fill="#1e90ff" stroke="#0a5fc0" stroke-width="0.6"/></svg><div class="t" style="left:31px;top:885px;font-size:12.5px;line-height:16px;color:#000">1152701012</div><div class="t" style="right:1465px;top:885px;font-size:12.5px;line-height:16px;color:#000">2022.07.21 13:42:26</div><div class="t" style="right:1335px;top:885px;font-size:12.5px;line-height:16px;color:#000">buy</div><div class="t" style="right:1235px;top:885px;font-size:12.5px;line-height:16px;color:#000">2.00</div><div class="t" style="right:1107px;top:885px;font-size:12.5px;line-height:16px;color:#000">xauusd</div><div class="t" style="right:963px;top:885px;font-size:12.5px;line-height:16px;color:#000">1681.00</div><div class="t" style="right:820px;top:885px;font-size:12.5px;line-height:16px;color:#000">1710.43</div><div class="t" style="right:677px;top:885px;font-size:12.5px;line-height:16px;color:#000">0.00</div><div class="t" style="right:534px;top:885px;font-size:12.5px;line-height:16px;color:#000">1771.81</div><div class="t" style="right:391px;top:885px;font-size:12.5px;line-height:16px;color:#000">0.00</div><div class="t" style="right:248px;top:885px;font-size:12.5px;line-height:16px;color:#000">-153.00</div><div class="t" style="right:46px;top:885px;font-size:12.5px;line-height:16px;color:#000">17 098.00</div><svg style="position:absolute;left:1876px;top:888px" width="10" height="10"><path d="M1.5 1.5 L8.5 8.5 M8.5 1.5 L1.5 8.5" stroke="#8a8a8a" stroke-width="2"/></svg><div style="position:absolute;left:0;top:891px;width:1909px;height:1px;background:#000"></div><div style="position:absolute;left:0;top:892px;width:1913px;height:10px;background:#f0f0f0"></div><div style="position:absolute;left:1892px;top:648px;width:18px;height:243px;background:#f0f0f0"></div><div style="position:absolute;left:1892px;top:648px;width:17px;height:17px;background:#dadada"></div><svg style="position:absolute;left:1892px;top:648px" width="17" height="17"><path d="M4.5 10.5 L8.5 6.5 L12.5 10.5" stroke="#000" stroke-width="1.8" fill="none"/></svg><div style="position:absolute;left:1893px;top:691px;width:13px;height:87px;background:#c2c2c2"></div><svg style="position:absolute;left:1892px;top:874px" width="17" height="17"><path d="M4.5 5.5 L8.5 9.5 L12.5 5.5" stroke="#606060" stroke-width="1.4" fill="none"/></svg><div style="position:absolute;left:10px;top:891px;width:44px;height:12px;background:#fff;border-left:1px solid #000;border-right:1px solid #000"></div><div class="t" style="left:21px;top:893px;font-size:12.5px;line-height:16px;color:#000">交易</div><div class="t" style="left:65px;top:893px;font-size:12.5px;line-height:16px;color:#6d6d6d">展示</div><div class="t" style="left:108px;top:893px;font-size:12.5px;line-height:16px;color:#6d6d6d">账户历史</div><div class="t" style="left:176px;top:893px;font-size:12.5px;line-height:16px;color:#6d6d6d">新闻</div><div class="t" style="left:220px;top:893px;font-size:12.5px;line-height:16px;color:#6d6d6d">警报</div><div class="t" style="left:264px;top:893px;font-size:12.5px;line-height:16px;color:#6d6d6d">邮箱</div><div class="t" style="left:308px;top:893px;font-size:12.5px;line-height:16px;color:#6d6d6d">市场</div><div class="t" style="left:371px;top:893px;font-size:12.5px;line-height:16px;color:#6d6d6d">信号</div><div class="t" style="left:416px;top:893px;font-size:12.5px;line-height:16px;color:#6d6d6d">文章</div><div class="t" style="left:460px;top:893px;font-size:12.5px;line-height:16px;color:#6d6d6d">代码库</div><div class="t" style="left:515px;top:893px;font-size:12.5px;line-height:16px;color:#6d6d6d">EA</div><div class="t" style="left:552px;top:893px;font-size:12.5px;line-height:16px;color:#6d6d6d">日志</div><div style="position:absolute;left:99px;top:895px;width:1px;height:8px;background:#909090"></div><div style="position:absolute;left:167px;top:895px;width:1px;height:8px;background:#909090"></div><div style="position:absolute;left:211px;top:895px;width:1px;height:8px;background:#909090"></div><div style="position:absolute;left:255px;top:895px;width:1px;height:8px;background:#909090"></div><div style="position:absolute;left:299px;top:895px;width:1px;height:8px;background:#909090"></div><div style="position:absolute;left:358px;top:895px;width:1px;height:8px;background:#909090"></div><div style="position:absolute;left:404px;top:895px;width:1px;height:8px;background:#909090"></div><div style="position:absolute;left:448px;top:895px;width:1px;height:8px;background:#909090"></div><div style="position:absolute;left:503px;top:895px;width:1px;height:8px;background:#909090"></div><div style="position:absolute;left:542px;top:895px;width:1px;height:8px;background:#909090"></div><div style="position:absolute;left:585px;top:895px;width:1px;height:8px;background:#909090"></div><div class="t" style="left:-1px;top:889px;font-size:11px;line-height:14px;color:#000">器</div><svg style="position:absolute;left:1840px;top:876px" width="70" height="24"><rect x="2" y="1" width="19" height="20" rx="5" fill="#f4886a" opacity="0.9"/><circle cx="11.5" cy="12" r="5" fill="#fff" opacity="0.6"/><text x="27" y="15" font-family="Liberation Serif" font-weight="bold" font-size="12.5" fill="#f59078" opacity="0.9" textLength="37">EAHub</text></svg>
</body></html>
